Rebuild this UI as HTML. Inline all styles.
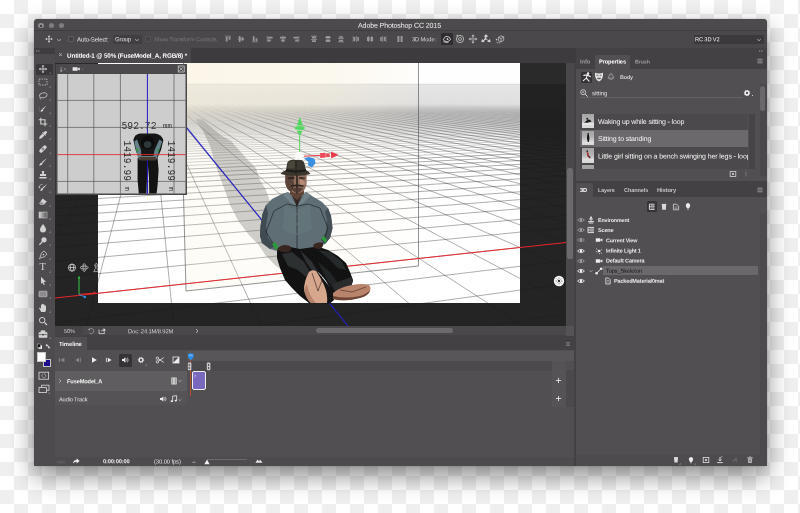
<!DOCTYPE html>
<html><head><meta charset="utf-8"><title>Adobe Photoshop CC 2015</title>
<style>
*{box-sizing:border-box;margin:0;padding:0}
html,body{width:800px;height:513px;overflow:hidden;background:#fff}
body{font-family:"Liberation Sans",sans-serif;color:#e6e6e6;font-size:6.5px;line-height:1;position:relative}
.abs,#page *{position:absolute}
#page{will-change:transform;position:absolute;left:0;top:0;width:800px;height:513px;overflow:hidden;
 background-color:#fff;
 background-image:conic-gradient(#efefef 25%,#fff 0 50%,#efefef 0 75%,#fff 0);
 background-size:28px 28px}
#shadow{left:34px;top:19px;width:732.6px;height:447.3px;border-radius:4px;box-shadow:0 10px 24px rgba(0,0,0,.46),0 0 1.5px rgba(0,0,0,.3)}
#win{left:34px;top:19px;width:732.6px;height:447.3px;border-radius:4px 4px 0 0;background:#434143;overflow:hidden}
.t{white-space:nowrap}
.b{font-weight:bold}
</style></head><body>
<div id="page">
<div id="shadow"></div>
<div id="win">
<div id="w" style="left:-34px;top:-19px;width:800px;height:513px">
<!-- title bar -->
<div style="left:34px;top:19px;width:733px;height:12px;background:#4c4a4c"></div>
<div style="left:34px;top:30px;width:733px;height:1px;background:#3f3d3f"></div>
<div style="left:38.4px;top:22.7px;width:5.8px;height:5.8px;border-radius:50%;background:#8c8a8c"></div>
<div style="left:40.2px;top:24.5px;width:2.2px;height:2.2px;border-radius:50%;background:#2a282a"></div>
<div style="left:48.6px;top:22.7px;width:5.8px;height:5.8px;border-radius:50%;background:#7f7d7f"></div>
<div style="left:58.7px;top:22.7px;width:5.8px;height:5.8px;border-radius:50%;background:#7f7d7f"></div>
<div class="t" style="left:358.0px;top:22px;transform:translateY(0.73px) rotate(.03deg);font-size:7.1px;letter-spacing:-0.150px;color:#f2f2f2;">Adobe Photoshop CC 2015</div>
<!-- options bar -->
<div style="left:34px;top:31px;width:733px;height:17px;background:#4a484a"></div>
<svg style="left:44.8px;top:35.4px" width="8.0" height="8.0" viewBox="-5 -5 10 10"><path d="M0 -4.6L1.5 -2.8H.45V-.45H2.8V-1.5L4.6 0L2.8 1.5V.45H.45V2.8H1.5L0 4.6L-1.5 2.8H-.45V.45H-2.8V1.5L-4.6 0L-2.8 -1.5V-.45H-.45V-2.8H-1.5Z" fill="#e8e8e8"/></svg>
<svg style="left:55.2px;top:36.8px" width="8" height="6" viewBox="-4 -3 8 6"><path d="M-2.0 -0.6L0 0.6L2.0 -0.6" fill="none" stroke="#c8c8c8" stroke-width="0.7"/></svg>
<div style="left:68.2px;top:36.2px;width:6.0px;height:6.0px;background:#424042;border:.6px solid #5e5c5e;border-radius:1px"></div>
<div class="t" style="left:77.0px;top:36px;transform:translateY(0.45px) rotate(.03deg);font-size:6.1px;letter-spacing:-0.144px;color:#e2e2e2;">Auto-Select:</div>
<div style="left:112.5px;top:35.0px;width:29.0px;height:9.0px;background:#403e40;border-radius:1px"></div>
<div class="t" style="left:115.0px;top:36px;transform:translateY(0.19px) rotate(.03deg);font-size:6.0px;letter-spacing:-0.135px;color:#e2e2e2;">Group</div>
<svg style="left:132.6px;top:36.8px" width="8" height="6" viewBox="-4 -3 8 6"><path d="M-2.0 -0.6L0 0.6L2.0 -0.6" fill="none" stroke="#c8c8c8" stroke-width="0.7"/></svg>
<div style="left:144.5px;top:36.0px;width:6.4px;height:6.4px;background:#454345;border:.6px solid #555355;border-radius:1px"></div>
<div class="t" style="left:153.6px;top:37px;transform:translateY(0.20px) rotate(.03deg);font-size:5.8px;letter-spacing:-0.128px;color:#7c7a7c;">Show Transform Controls</div>
<svg style="left:222.5px;top:33.8px" width="10" height="10" viewBox="-5.0 -5.0 10 10"><path d="M-3 -3.2H3V-2.4H-3Z M-2.2 -2H-.4V2.6H-2.2Z M.6 -2H2.4V.8H.6Z" fill="#989698"/></svg>
<svg style="left:236.0px;top:33.8px" width="10" height="10" viewBox="-5.0 -5.0 10 10"><path d="M-3.2 -.4H3.2V.4H-3.2Z M-2.2 -3H-.4V3H-2.2Z M.6 -1.8H2.4V1.8H.6Z" fill="#989698"/></svg>
<svg style="left:249.5px;top:33.8px" width="10" height="10" viewBox="-5.0 -5.0 10 10"><path d="M-3 2.4H3V3.2H-3Z M-2.2 -2.8H-.4V2H-2.2Z M.6 -.8H2.4V2H.6Z" fill="#989698"/></svg>
<svg style="left:265.0px;top:33.8px" width="10" height="10" viewBox="-5.0 -5.0 10 10"><path d="M-3.2 -3H-2.4V3H-3.2Z M-2 -2.2H2.6V-.4H-2Z M-2 .6H.8V2.4H-2Z" fill="#989698"/></svg>
<svg style="left:278.0px;top:33.8px" width="10" height="10" viewBox="-5.0 -5.0 10 10"><path d="M-.4 -3.2H.4V3.2H-.4Z M-3 -2.2H3V-.4H-3Z M-1.8 .6H1.8V2.4H-1.8Z" fill="#989698"/></svg>
<svg style="left:291.0px;top:33.8px" width="10" height="10" viewBox="-5.0 -5.0 10 10"><path d="M2.4 -3H3.2V3H2.4Z M-2.6 -2.2H2V-.4H-2.6Z M-.8 .6H2V2.4H-.8Z" fill="#989698"/></svg>
<svg style="left:309.0px;top:33.8px" width="10" height="10" viewBox="-5.0 -5.0 10 10"><path d="M-3 -3.2H3V-2.5H-3Z M-2 -2.2H2V-.6H-2Z M-3 .3H3V1H-3Z M-2 1.3H2V2.9H-2Z" fill="#989698"/></svg>
<svg style="left:322.5px;top:33.8px" width="10" height="10" viewBox="-5.0 -5.0 10 10"><path d="M-3 -2H3V-1.3H-3Z M-2 -3H2V-.4H-2Z M-3 1.4H3V2.1H-3Z M-2 .5H2V3.1H-2Z" fill="#989698"/></svg>
<svg style="left:335.7px;top:33.8px" width="10" height="10" viewBox="-5.0 -5.0 10 10"><path d="M-3 -.9H3V-.2H-3Z M-2 -2.8H2V-1.2H-2Z M-3 2.6H3V3.3H-3Z M-2 .7H2V2.3H-2Z" fill="#989698"/></svg>
<svg style="left:351.0px;top:33.8px" width="10" height="10" viewBox="-5.0 -5.0 10 10"><path d="M-3.2 -3H-2.5V3H-3.2Z M-2.2 -2H-.6V2H-2.2Z M.3 -3H1V3H.3Z M1.3 -2H2.9V2H1.3Z" fill="#989698"/></svg>
<svg style="left:364.5px;top:33.8px" width="10" height="10" viewBox="-5.0 -5.0 10 10"><path d="M-2 -3H-1.3V3H-2Z M-3 -2H-.4V2H-3Z M1.4 -3H2.1V3H1.4Z M.5 -2H3.1V2H.5Z" fill="#989698"/></svg>
<svg style="left:378.0px;top:33.8px" width="10" height="10" viewBox="-5.0 -5.0 10 10"><path d="M-.9 -3H-.2V3H-.9Z M-2.8 -2H-1.2V2H-2.8Z M2.6 -3H3.3V3H2.6Z M.7 -2H2.3V2H.7Z" fill="#989698"/></svg>
<svg style="left:395.0px;top:33.8px" width="10" height="10" viewBox="-5.0 -5.0 10 10"><path d="M-2.6 -3H-.6V3H-2.6Z M.6 -3H2.6V3H.6Z" fill="#989698"/></svg>
<div class="t" style="left:412.0px;top:37px;transform:translateY(0.20px) rotate(.03deg);font-size:5.8px;letter-spacing:-0.143px;color:#d8d8d8;">3D Mode:</div>
<div style="left:440.6px;top:33.0px;width:12.6px;height:12.0px;background:#2f2d2f;border-radius:1.5px"></div>
<svg style="left:441.0px;top:32.8px" width="12" height="12" viewBox="-6.0 -6.0 12 12"><path d="M-3.6 .2L-1.4 -2.6L2.2 -2L3.6 .6L.6 2.8L-2.6 2Z" fill="none" stroke="#e6e6e6" stroke-width=".8"/><path d="M-3.8 2.6Q-1 4 1.6 3.2" fill="none" stroke="#e6e6e6" stroke-width=".7"/><path d="M-.2 -1.2L1.8 .2L-.2 1.2Z" fill="#e6e6e6"/></svg>
<svg style="left:454.0px;top:32.8px" width="12" height="12" viewBox="-6.0 -6.0 12 12"><circle r="3.6" fill="none" stroke="#d0d0d0" stroke-width=".8"/><circle r="1.5" fill="none" stroke="#d0d0d0" stroke-width=".7"/><path d="M-4 -3L-2.2 -4.2L-2 -2.4Z" fill="#d0d0d0"/></svg>
<svg style="left:467.0px;top:32.8px" width="12" height="12" viewBox="-6.0 -6.0 12 12"><path d="M0 -4.4L1.6 -2.4H-1.6Z M0 4.4L1.6 2.4H-1.6Z M-4.4 0L-2.4 -1.6V1.6Z M4.4 0L2.4 -1.6V1.6Z" fill="#d0d0d0"/><circle r="1.3" fill="none" stroke="#d0d0d0" stroke-width=".7"/></svg>
<svg style="left:480.0px;top:32.8px" width="12" height="12" viewBox="-6.0 -6.0 12 12"><path d="M0 -4.4L1.5 -2.6H-1.5Z M-4.2 2.8L-3.6 .6L-1.8 2.4Z M4.2 2.8L3.6 .6L1.8 2.4Z M0 -2.8V0L-2.8 1.8M0 0L2.8 1.8" fill="#e0e0e0" stroke="#e0e0e0" stroke-width=".7"/></svg>
<svg style="left:494.0px;top:32.8px" width="12" height="12" viewBox="-6.0 -6.0 12 12"><path d="M-1.6 -1.6L1 -3.2L3.8 -2L3.6 1.4L1 3L-1.6 1.6Z M-1.6 -1.6L1 -.4L3.8 -2M1 -.4V3" fill="none" stroke="#d0d0d0" stroke-width=".7"/><path d="M-4.2 -.6L-2.4 .4L-4 1.8Z" fill="#d0d0d0"/><path d="M-3.6 3.2Q-1.6 4.2 .2 3.8" stroke="#d0d0d0" stroke-width=".6" fill="none"/></svg>
<div style="left:693.5px;top:34.6px;width:70.0px;height:9.4px;background:#3b393b;border-radius:1px"></div>
<div class="t" style="left:695.4px;top:37px;transform:translateY(0.20px) rotate(.03deg);font-size:5.7px;letter-spacing:-0.145px;color:#f0f0f0;">RC 3D V2</div>
<svg style="left:755.0px;top:36.6px" width="8" height="6" viewBox="-4 -3 8 6"><path d="M-1.6 -0.7L0 0.7L1.6 -0.7" fill="none" stroke="#e0e0e0" stroke-width="0.7"/></svg>
<!-- tab bar -->
<div style="left:34px;top:48px;width:733px;height:15px;background:#3d3b3d"></div>
<div style="left:55px;top:48px;width:136px;height:15px;background:#4a484a"></div>
<div class="t" style="left:58.5px;top:51px;font-size:7px;color:#bdbdbd">×</div>
<div class="t b" style="left:67.0px;top:52px;transform:translateY(0.78px) rotate(.03deg);font-size:6.3px;letter-spacing:-0.132px;color:#fff;">Untitled-1 @ 50% (FuseModel_A, RGB/8) *</div>
<!-- left toolbar -->
<div style="left:34px;top:48px;width:21px;height:419px;background:#4d4b4d"></div>
<div style="left:34px;top:48px;width:21px;height:6px;background:#3f3d3f"></div>
<svg style="left:35.4px;top:49.2px" width="6" height="4" viewBox="-3.0 -2.0 6 4"><path d="M-1.8 -1L-.8 0L-1.8 1M.4 -1L1.4 0L.4 1" fill="none" stroke="#a8a6a8" stroke-width=".6"/></svg>
<div style="left:36.0px;top:64.0px;width:16.6px;height:10.6px;background:#393739;border-radius:1.5px"></div>
<svg style="left:37.4px;top:63.0px" width="12" height="12" viewBox="-6.0 -6.0 12 12"><path d="M0 -4.2L1.4 -2.6H.4V-.4H2.6V-1.4L4.2 0L2.6 1.4V.4H.4V2.6H1.4L0 4.2L-1.4 2.6H-.4V.4H-2.6V1.4L-4.2 0L-2.6 -1.4V-.4H-.4V-2.6H-1.4Z" fill="#d2d2d2"/></svg>
<svg style="left:49px;top:72.2px" width="2" height="2" viewBox="0 0 2 2"><path d="M1.6 .2V1.6H.2Z" fill="#bdbdbd"/></svg>
<svg style="left:37.4px;top:76.2px" width="12" height="12" viewBox="-6.0 -6.0 12 12"><rect x="-4" y="-3" width="8" height="6" fill="none" stroke="#c4c4c4" stroke-width=".8" stroke-dasharray="1.5 1"/></svg>
<svg style="left:49px;top:85.5px" width="2" height="2" viewBox="0 0 2 2"><path d="M1.6 .2V1.6H.2Z" fill="#bdbdbd"/></svg>
<svg style="left:37.4px;top:89.5px" width="12" height="12" viewBox="-6.0 -6.0 12 12"><ellipse cx=".4" cy="-.6" rx="3.9" ry="2.5" fill="none" stroke="#c4c4c4" stroke-width=".8" transform="rotate(-12)"/><path d="M-3 1.2Q-3.6 3 -2 3.4" fill="none" stroke="#c4c4c4" stroke-width=".7"/></svg>
<svg style="left:49px;top:98.7px" width="2" height="2" viewBox="0 0 2 2"><path d="M1.6 .2V1.6H.2Z" fill="#bdbdbd"/></svg>
<svg style="left:37.4px;top:102.8px" width="12" height="12" viewBox="-6.0 -6.0 12 12"><path d="M3.6 -3.6L.2 .6L-.8 -.2Z M-.6 .2Q-2.6 .4 -2.4 2.8Q0 3 .6 1Z" fill="#d2d2d2"/><path d="M-3.8 -1.8Q-4.2 2 -2.6 3.4" stroke="#a0a0a0" stroke-width=".5" fill="none" stroke-dasharray="1 .7"/></svg>
<svg style="left:49px;top:112.0px" width="2" height="2" viewBox="0 0 2 2"><path d="M1.6 .2V1.6H.2Z" fill="#bdbdbd"/></svg>
<svg style="left:37.4px;top:116.0px" width="12" height="12" viewBox="-6.0 -6.0 12 12"><path d="M-2.2 -4.2V2H4.2 M-4.2 -2.2H2V4.2" fill="none" stroke="#d2d2d2" stroke-width="1.1"/></svg>
<svg style="left:49px;top:125.2px" width="2" height="2" viewBox="0 0 2 2"><path d="M1.6 .2V1.6H.2Z" fill="#bdbdbd"/></svg>
<svg style="left:37.4px;top:129.2px" width="12" height="12" viewBox="-6.0 -6.0 12 12"><path d="M3.8 -3.8Q2.6 -4.6 1.6 -3.4L.6 -2.4L0 -3L-.8 -2.2L2.2 .8L3 0L2.4 -.6L3.4 -1.6Q4.6 -2.6 3.8 -3.8Z M-.4 -1.4L-3.4 1.6L-3.8 3.8L-1.6 3.4L1.4 .4Z" fill="#d2d2d2"/></svg>
<svg style="left:49px;top:138.4px" width="2" height="2" viewBox="0 0 2 2"><path d="M1.6 .2V1.6H.2Z" fill="#bdbdbd"/></svg>
<svg style="left:37.4px;top:142.5px" width="12" height="12" viewBox="-6.0 -6.0 12 12"><g transform="rotate(-45)"><rect x="-4.4" y="-1.8" width="8.8" height="3.6" rx="1.6" fill="#d2d2d2"/><rect x="-1.3" y="-1.3" width="2.6" height="2.6" fill="#8a888a"/></g></svg>
<svg style="left:49px;top:151.7px" width="2" height="2" viewBox="0 0 2 2"><path d="M1.6 .2V1.6H.2Z" fill="#bdbdbd"/></svg>
<svg style="left:37.4px;top:155.8px" width="12" height="12" viewBox="-6.0 -6.0 12 12"><path d="M4 -4L-.2 1L-1.2 0Z M-1.4 .4Q-3.4 .8 -3.8 3.8Q-.8 3.6 -.2 1.6Z" fill="#d2d2d2"/></svg>
<svg style="left:49px;top:164.9px" width="2" height="2" viewBox="0 0 2 2"><path d="M1.6 .2V1.6H.2Z" fill="#bdbdbd"/></svg>
<svg style="left:37.4px;top:169.0px" width="12" height="12" viewBox="-6.0 -6.0 12 12"><path d="M-1.2 -4H1.2L.8 -1H3V1H-3V-1H-.8Z M-3.6 2H3.6V3.4H-3.6Z" fill="#d2d2d2"/></svg>
<svg style="left:49px;top:178.2px" width="2" height="2" viewBox="0 0 2 2"><path d="M1.6 .2V1.6H.2Z" fill="#bdbdbd"/></svg>
<svg style="left:37.4px;top:182.2px" width="12" height="12" viewBox="-6.0 -6.0 12 12"><path d="M4 -4L.6 .4L-.4 -.4Z M-.6 -.2Q-2.4 .2 -2.8 3Q-.2 2.8 .2 1Z" fill="#d2d2d2"/><path d="M-3.8 -.6A3 3 0 0 1 -.4 -3.6" fill="none" stroke="#d0d0d0" stroke-width=".7"/><path d="M-4.6 -1.2L-3.6 .6L-2.6 -1Z" fill="#d0d0d0"/></svg>
<svg style="left:49px;top:191.4px" width="2" height="2" viewBox="0 0 2 2"><path d="M1.6 .2V1.6H.2Z" fill="#bdbdbd"/></svg>
<svg style="left:37.4px;top:195.5px" width="12" height="12" viewBox="-6.0 -6.0 12 12"><path d="M-.4 -3.4L3.8 -.4L.6 3H-2L-3.8 1.4Z" fill="#d2d2d2"/><path d="M-2.2 -.6L1.6 2.2L.6 3H-2L-3.8 1.4Z" fill="#9a989a"/></svg>
<svg style="left:49px;top:204.7px" width="2" height="2" viewBox="0 0 2 2"><path d="M1.6 .2V1.6H.2Z" fill="#bdbdbd"/></svg>
<svg style="left:37.4px;top:208.8px" width="12" height="12" viewBox="-6.0 -6.0 12 12"><defs><linearGradient id="tg" x1="0" x2="1"><stop offset="0" stop-color="#d2d2d2"/><stop offset="1" stop-color="#555"/></linearGradient></defs><rect x="-4" y="-3" width="8" height="6" fill="url(#tg)" stroke="#c4c4c4" stroke-width=".6"/></svg>
<svg style="left:49px;top:217.9px" width="2" height="2" viewBox="0 0 2 2"><path d="M1.6 .2V1.6H.2Z" fill="#bdbdbd"/></svg>
<svg style="left:37.4px;top:222.0px" width="12" height="12" viewBox="-6.0 -6.0 12 12"><path d="M0 -4Q3 -.2 3 1.4A3 3 0 0 1 -3 1.4Q-3 -.2 0 -4Z" fill="#d2d2d2"/></svg>
<svg style="left:49px;top:231.2px" width="2" height="2" viewBox="0 0 2 2"><path d="M1.6 .2V1.6H.2Z" fill="#bdbdbd"/></svg>
<svg style="left:37.4px;top:235.2px" width="12" height="12" viewBox="-6.0 -6.0 12 12"><circle cx="1" cy="-1.2" r="2.6" fill="#d2d2d2"/><path d="M-.6 .6L-3.6 3.8" stroke="#d2d2d2" stroke-width="1.3"/></svg>
<svg style="left:49px;top:244.4px" width="2" height="2" viewBox="0 0 2 2"><path d="M1.6 .2V1.6H.2Z" fill="#bdbdbd"/></svg>
<svg style="left:37.4px;top:248.5px" width="12" height="12" viewBox="-6.0 -6.0 12 12"><path d="M1 -4L4 -1L1.8 1.6L-2.6 3L-3.6 3.8L-3 2.6L-1.6 -1.8Z" fill="none" stroke="#d2d2d2" stroke-width=".8"/><circle cx=".4" cy="-.4" r=".8" fill="#d2d2d2"/></svg>
<svg style="left:49px;top:257.7px" width="2" height="2" viewBox="0 0 2 2"><path d="M1.6 .2V1.6H.2Z" fill="#bdbdbd"/></svg>
<svg style="left:49px;top:270.9px" width="2" height="2" viewBox="0 0 2 2"><path d="M1.6 .2V1.6H.2Z" fill="#bdbdbd"/></svg>
<svg style="left:37.4px;top:275.0px" width="12" height="12" viewBox="-6.0 -6.0 12 12"><path d="M-2 -4.2L3 1L.6 1L1.8 3.6L.6 4.1L-.6 1.5L-2 3Z" fill="#d2d2d2"/></svg>
<svg style="left:49px;top:284.2px" width="2" height="2" viewBox="0 0 2 2"><path d="M1.6 .2V1.6H.2Z" fill="#bdbdbd"/></svg>
<svg style="left:37.4px;top:288.2px" width="12" height="12" viewBox="-6.0 -6.0 12 12"><rect x="-4" y="-2.8" width="8" height="5.6" rx=".6" fill="#8c8a8c" stroke="#cfcfcf" stroke-width=".6"/></svg>
<svg style="left:49px;top:297.4px" width="2" height="2" viewBox="0 0 2 2"><path d="M1.6 .2V1.6H.2Z" fill="#bdbdbd"/></svg>
<svg style="left:37.4px;top:301.5px" width="12" height="12" viewBox="-6.0 -6.0 12 12"><path d="M-1.8 4L-3.8 .6Q-4.2 -.4 -3.2 -.6L-2 .8V-2.8Q-2 -3.6 -1.2 -3.6V-.6V-3.8Q-.4 -4.6 .2 -3.8V-.6V-3.4Q1 -4 1.6 -3.2V-.4V-2.4Q2.6 -3 3 -2V1.6Q3 3 2.2 4Z" fill="#d2d2d2"/></svg>
<svg style="left:49px;top:310.7px" width="2" height="2" viewBox="0 0 2 2"><path d="M1.6 .2V1.6H.2Z" fill="#bdbdbd"/></svg>
<svg style="left:37.4px;top:314.8px" width="12" height="12" viewBox="-6.0 -6.0 12 12"><circle cx="-.8" cy="-.8" r="2.8" fill="none" stroke="#d2d2d2" stroke-width="1"/><path d="M1.4 1.4L4 4" stroke="#d2d2d2" stroke-width="1.3"/></svg>
<svg style="left:37.4px;top:328.0px" width="12" height="12" viewBox="-6.0 -6.0 12 12"><path d="M-4 -1.4H4V3.4H-4Z M-2 -1.6V-3.2H2V-1.6" fill="#d2d2d2" stroke="#d2d2d2" stroke-width=".7"/><path d="M-4 .6H4" stroke="#4d4b4d" stroke-width=".7"/><rect x="-.9" y="-.1" width="1.8" height="1.5" fill="#4d4b4d"/></svg>
<svg style="left:49px;top:337.2px" width="2" height="2" viewBox="0 0 2 2"><path d="M1.6 .2V1.6H.2Z" fill="#bdbdbd"/></svg>
<div class="t" style="left:39.6px;top:262.4px;font-size:10.5px;color:#d2d2d2;font-family:'Liberation Serif',serif">T</div>
<svg style="left:36px;top:342.6px" width="16" height="8" viewBox="0 0 16 8"><rect x="2.6" y="2.4" width="3.4" height="3.4" fill="#fff"/><rect x="1.2" y="1" width="3.4" height="3.4" fill="#111" stroke="#ddd" stroke-width=".4"/><path d="M10.4 2.2Q12.6 1.6 13 4.6 M9.8 2.2L11 1.2V3.2Z M13 5.4L12 4.2H14Z" fill="#ddd" stroke="#ddd" stroke-width=".5"/></svg>
<div style="left:43.0px;top:358.5px;width:8.0px;height:8.0px;background:#1c0f8c;border:.7px solid #c4c4c4"></div>
<div style="left:36.6px;top:352.4px;width:9.6px;height:9.6px;background:#ffffff;border:.5px solid #c8c8c8"></div>
<svg style="left:38px;top:371.4px" width="12" height="10" viewBox="0 0 12 10"><rect x="1" y="1.2" width="9.6" height="7" fill="none" stroke="#dcdcdc" stroke-width=".8"/><circle cx="5.8" cy="4.7" r="1.9" fill="none" stroke="#dcdcdc" stroke-width=".7" stroke-dasharray="1 .6"/></svg>
<svg style="left:38px;top:384px" width="13" height="11" viewBox="0 0 13 11"><rect x="3.6" y="1.2" width="7.4" height="5" fill="none" stroke="#dcdcdc" stroke-width=".8"/><rect x="1" y="3.6" width="7.4" height="5" fill="#4d4b4d" stroke="#dcdcdc" stroke-width=".8"/><path d="M11.6 9.6V8.2L10.2 9.6Z" fill="#bdbdbd"/></svg>
<!-- canvas area -->
<div style="left:55px;top:63px;width:511px;height:263px;background:#252425;overflow:hidden">
<svg style="left:0;top:0" width="511" height="263" viewBox="55 63 511 263">
<defs>
<clipPath id="cv"><rect x="98" y="63" width="422" height="240"/></clipPath>
<linearGradient id="fog" x1="0" y1="84" x2="0" y2="134" gradientUnits="userSpaceOnUse">
<stop offset="0" stop-color="#e6e6e6" stop-opacity="1"/><stop offset=".4" stop-color="#e6e6e6" stop-opacity=".96"/><stop offset=".58" stop-color="#e4e4e4" stop-opacity=".55"/><stop offset=".8" stop-color="#e6e6e6" stop-opacity=".2"/><stop offset="1" stop-color="#e6e6e6" stop-opacity="0"/></linearGradient>
<linearGradient id="dfog" x1="0" y1="84" x2="0" y2="134" gradientUnits="userSpaceOnUse"><stop offset="0" stop-color="#232223" stop-opacity="1"/><stop offset=".45" stop-color="#232223" stop-opacity=".95"/><stop offset="1" stop-color="#232223" stop-opacity="0"/></linearGradient>
<linearGradient id="tint" x1="183" y1="0" x2="419" y2="0" gradientUnits="userSpaceOnUse">
<stop offset="0" stop-color="#f9eed3" stop-opacity=".36"/><stop offset=".6" stop-color="#f9eed3" stop-opacity=".26"/><stop offset="1" stop-color="#f9eed3" stop-opacity=".04"/></linearGradient>
<linearGradient id="skyg" x1="0" y1="63" x2="0" y2="125" gradientUnits="userSpaceOnUse"><stop offset="0" stop-color="#fff"/><stop offset=".66" stop-color="#fff"/><stop offset="1" stop-color="#000"/></linearGradient>
<mask id="skym" maskUnits="userSpaceOnUse" x="183" y="63" width="236" height="62"><rect x="183" y="63" width="236" height="62" fill="url(#skyg)"/></mask>
<filter id="bl" x="-20%" y="-20%" width="140%" height="140%"><feGaussianBlur stdDeviation="1.6"/></filter>
<filter id="b1" x="-20%" y="-20%" width="140%" height="140%"><feGaussianBlur stdDeviation=".5"/></filter>
</defs>
<path d="M50.0 175.5L571.0 151.3M50.0 179.7L571.0 154.5M50.0 184.3L571.0 157.9M50.0 189.4L571.0 161.6M50.0 195.1L571.0 165.8M50.0 201.4L571.0 170.4M50.0 208.4L571.0 175.6M50.0 216.4L571.0 181.4M50.0 225.4L571.0 188.1M50.0 235.7L571.0 195.7M50.0 247.7L571.0 204.5M50.0 261.7L571.0 214.8M50.0 278.4L571.0 227.1M50.0 298.5L571.0 241.9M50.0 323.3L571.0 260.1M221.4 331.0L571.0 283.1M456.7 331.0L571.0 313.0M50.0 95.7L150.0 84.0M50.0 96.2L150.0 84.0M50.0 96.7L150.0 84.0M50.0 97.4L150.0 84.0M50.0 98.0L150.0 84.0M50.0 98.8L150.0 84.0M50.0 99.6L150.0 84.0M50.0 100.6L150.0 84.0M50.0 101.6L150.0 84.0M50.0 102.8L150.0 84.0M50.0 104.2L150.0 84.0M50.0 105.8L150.0 84.0M50.0 107.6L150.0 84.0M50.0 109.8L150.0 84.0M50.0 112.5L150.0 84.0M50.0 115.7L150.0 84.0M50.0 119.8L150.0 84.0M50.0 125.2L150.0 84.0M50.0 132.4L150.0 84.0M50.0 142.6L150.0 84.0M50.0 158.3L150.0 84.0M50.0 185.5L150.0 84.0M50.0 244.2L150.0 84.0M85.0 331.0L150.0 84.0M174.2 331.0L150.0 84.0M263.3 331.0L150.0 84.0M352.5 331.0L150.0 84.0M441.6 331.0L150.0 84.0M530.8 331.0L150.0 84.0M571.0 305.3L150.0 84.0M571.0 270.0L150.0 84.0M571.0 244.4L150.0 84.0M571.0 225.0L150.0 84.0M571.0 209.8L150.0 84.0M571.0 197.6L150.0 84.0M571.0 187.5L150.0 84.0M571.0 179.0L150.0 84.0M571.0 171.9L150.0 84.0M571.0 165.7L150.0 84.0M571.0 160.4L150.0 84.0M571.0 155.7L150.0 84.0M571.0 151.5L150.0 84.0M571.0 147.8L150.0 84.0M571.0 144.5L150.0 84.0M571.0 141.5L150.0 84.0M571.0 138.8L150.0 84.0M571.0 136.4L150.0 84.0M571.0 134.1L150.0 84.0M571.0 132.1L150.0 84.0M571.0 130.2L150.0 84.0M571.0 128.4L150.0 84.0M571.0 126.8L150.0 84.0M571.0 125.3L150.0 84.0M571.0 123.8L150.0 84.0M571.0 122.5L150.0 84.0M571.0 121.3L150.0 84.0M571.0 120.1L150.0 84.0M571.0 119.1L150.0 84.0M571.0 118.0L150.0 84.0M571.0 117.1L150.0 84.0M571.0 116.2L150.0 84.0M571.0 115.3L150.0 84.0M571.0 114.5L150.0 84.0M571.0 113.7L150.0 84.0M571.0 113.0L150.0 84.0M571.0 112.3L150.0 84.0M50.0 89.1L571.0 87.7M50.0 89.1L571.0 87.7M50.0 89.1L571.0 87.7M50.0 89.1L571.0 87.8M50.0 89.1L571.0 87.8M50.0 89.1L571.0 87.8M50.0 89.1L571.0 87.8M50.0 89.1L571.0 87.8M50.0 89.2L571.0 87.8M50.0 89.2L571.0 87.8M50.0 89.2L571.0 87.8M50.0 89.2L571.0 87.8M50.0 89.2L571.0 87.8M50.0 89.2L571.0 87.8M50.0 89.2L571.0 87.9M50.0 89.3L571.0 87.9M50.0 89.3L571.0 87.9M50.0 89.3L571.0 87.9M50.0 89.3L571.0 87.9M50.0 89.3L571.0 87.9M50.0 89.3L571.0 87.9M50.0 89.3L571.0 87.9M50.0 89.3L571.0 87.9M50.0 89.4L571.0 87.9M50.0 89.4L571.0 88.0M50.0 89.4L571.0 88.0M50.0 89.4L571.0 88.0M50.0 89.4L571.0 88.0M50.0 89.4L571.0 88.0M50.0 89.4L571.0 88.0M50.0 89.5L571.0 88.0M50.0 89.5L571.0 88.0M50.0 89.5L571.0 88.0M50.0 89.5L571.0 88.1M50.0 89.5L571.0 88.1M50.0 89.5L571.0 88.1M50.0 89.5L571.0 88.1M50.0 89.6L571.0 88.1M50.0 89.6L571.0 88.1M50.0 89.6L571.0 88.1M50.0 89.6L571.0 88.1M50.0 89.6L571.0 88.1M50.0 89.6L571.0 88.2M50.0 89.7L571.0 88.2M50.0 89.7L571.0 88.2M50.0 89.7L571.0 88.2M50.0 89.7L571.0 88.2M50.0 89.7L571.0 88.2M50.0 89.7L571.0 88.2M50.0 89.7L571.0 88.2M50.0 89.8L571.0 88.2M50.0 89.8L571.0 88.3M50.0 89.8L571.0 88.3M50.0 89.8L571.0 88.3M50.0 89.8L571.0 88.3M50.0 89.8L571.0 88.3M50.0 89.9L571.0 88.3M50.0 89.9L571.0 88.3M50.0 89.9L571.0 88.3M50.0 89.9L571.0 88.4M50.0 89.9L571.0 88.4M50.0 89.9L571.0 88.4M50.0 90.0L571.0 88.4M50.0 90.0L571.0 88.4M50.0 90.0L571.0 88.4M50.0 90.0L571.0 88.4M50.0 90.0L571.0 88.4M50.0 90.1L571.0 88.5M50.0 90.1L571.0 88.5M50.0 90.1L571.0 88.5M50.0 90.1L571.0 88.5M50.0 90.1L571.0 88.5M50.0 90.1L571.0 88.5M50.0 90.2L571.0 88.5M50.0 90.2L571.0 88.5M50.0 90.2L571.0 88.6M50.0 90.2L571.0 88.6M50.0 90.2L571.0 88.6M50.0 90.3L571.0 88.6M50.0 90.3L571.0 88.6M50.0 90.3L571.0 88.6M50.0 90.3L571.0 88.6M50.0 90.3L571.0 88.7M50.0 90.3L571.0 88.7M50.0 90.4L571.0 88.7M50.0 90.4L571.0 88.7M50.0 90.4L571.0 88.7M50.0 90.4L571.0 88.7M50.0 90.4L571.0 88.7M50.0 90.5L571.0 88.8M50.0 90.5L571.0 88.8M50.0 90.5L571.0 88.8M50.0 90.5L571.0 88.8M50.0 90.5L571.0 88.8M50.0 90.6L571.0 88.8M50.0 90.6L571.0 88.9M50.0 90.6L571.0 88.9M50.0 90.6L571.0 88.9M50.0 90.7L571.0 88.9M50.0 90.7L571.0 88.9M50.0 90.7L571.0 88.9M50.0 90.7L571.0 88.9M50.0 90.7L571.0 89.0M50.0 90.8L571.0 89.0M50.0 90.8L571.0 89.0M50.0 90.8L571.0 89.0M50.0 90.8L571.0 89.0M50.0 90.9L571.0 89.0M50.0 90.9L571.0 89.1M50.0 90.9L571.0 89.1M50.0 90.9L571.0 89.1M50.0 90.9L571.0 89.1M50.0 91.0L571.0 89.1M50.0 91.0L571.0 89.1M50.0 91.0L571.0 89.2M50.0 91.0L571.0 89.2M50.0 91.1L571.0 89.2M50.0 91.1L571.0 89.2M50.0 91.1L571.0 89.2M50.0 91.1L571.0 89.3M50.0 91.2L571.0 89.3M50.0 91.2L571.0 89.3M50.0 91.2L571.0 89.3M50.0 91.2L571.0 89.3M50.0 91.3L571.0 89.3M50.0 91.3L571.0 89.4M50.0 91.3L571.0 89.4M50.0 91.3L571.0 89.4M50.0 91.4L571.0 89.4M50.0 91.4L571.0 89.4M50.0 91.4L571.0 89.5M50.0 91.4L571.0 89.5M50.0 91.5L571.0 89.5M50.0 91.5L571.0 89.5M50.0 91.5L571.0 89.5M50.0 91.5L571.0 89.6M50.0 91.6L571.0 89.6M50.0 91.6L571.0 89.6M50.0 91.6L571.0 89.6M50.0 91.7L571.0 89.6M50.0 91.7L571.0 89.7M50.0 91.7L571.0 89.7M50.0 91.7L571.0 89.7M50.0 91.8L571.0 89.7M50.0 91.8L571.0 89.7M50.0 91.8L571.0 89.8M50.0 91.9L571.0 89.8M50.0 91.9L571.0 89.8M50.0 91.9L571.0 89.8M50.0 92.0L571.0 89.9M50.0 92.0L571.0 89.9M50.0 92.0L571.0 89.9M50.0 92.0L571.0 89.9M50.0 92.1L571.0 89.9M50.0 92.1L571.0 90.0M50.0 92.1L571.0 90.0M50.0 92.2L571.0 90.0M50.0 92.2L571.0 90.0M50.0 92.2L571.0 90.1M50.0 92.3L571.0 90.1M50.0 92.3L571.0 90.1M50.0 92.3L571.0 90.1M50.0 92.4L571.0 90.2M50.0 92.4L571.0 90.2M50.0 92.4L571.0 90.2M50.0 92.5L571.0 90.2M50.0 92.5L571.0 90.3M50.0 92.5L571.0 90.3M50.0 92.6L571.0 90.3M50.0 92.6L571.0 90.3M50.0 92.7L571.0 90.4M50.0 92.7L571.0 90.4M50.0 92.7L571.0 90.4M50.0 92.8L571.0 90.4M50.0 92.8L571.0 90.5M50.0 92.8L571.0 90.5M50.0 92.9L571.0 90.5M50.0 92.9L571.0 90.6M50.0 92.9L571.0 90.6M50.0 93.0L571.0 90.6M50.0 93.0L571.0 90.6M50.0 93.1L571.0 90.7M50.0 93.1L571.0 90.7M50.0 93.1L571.0 90.7M50.0 93.2L571.0 90.8M50.0 93.2L571.0 90.8M50.0 93.3L571.0 90.8M50.0 93.3L571.0 90.9M50.0 93.4L571.0 90.9M50.0 93.4L571.0 90.9M50.0 93.4L571.0 90.9M50.0 93.5L571.0 91.0M50.0 93.5L571.0 91.0M50.0 93.6L571.0 91.0M50.0 93.6L571.0 91.1M50.0 93.7L571.0 91.1M50.0 93.7L571.0 91.1M50.0 93.7L571.0 91.2M50.0 93.8L571.0 91.2M50.0 93.8L571.0 91.2M50.0 93.9L571.0 91.3M50.0 93.9L571.0 91.3M50.0 94.0L571.0 91.4M50.0 94.0L571.0 91.4M50.0 94.1L571.0 91.4M50.0 94.1L571.0 91.5M50.0 94.2L571.0 91.5M50.0 94.2L571.0 91.5M50.0 94.3L571.0 91.6M50.0 94.3L571.0 91.6M50.0 94.4L571.0 91.6M50.0 94.4L571.0 91.7M50.0 94.5L571.0 91.7M50.0 94.5L571.0 91.8M50.0 94.6L571.0 91.8M50.0 94.7L571.0 91.8M50.0 94.7L571.0 91.9M50.0 94.8L571.0 91.9M50.0 94.8L571.0 92.0M50.0 94.9L571.0 92.0M50.0 94.9L571.0 92.0M50.0 95.0L571.0 92.1M50.0 95.0L571.0 92.1M50.0 95.1L571.0 92.2M50.0 95.2L571.0 92.2M50.0 95.2L571.0 92.3M50.0 95.3L571.0 92.3M50.0 95.4L571.0 92.4M50.0 95.4L571.0 92.4M50.0 95.5L571.0 92.4M50.0 95.5L571.0 92.5M50.0 95.6L571.0 92.5M50.0 95.7L571.0 92.6M50.0 95.7L571.0 92.6M50.0 95.8L571.0 92.7M50.0 95.9L571.0 92.7M50.0 95.9L571.0 92.8M50.0 96.0L571.0 92.8M50.0 96.1L571.0 92.9M50.0 96.1L571.0 92.9M50.0 96.2L571.0 93.0M50.0 96.3L571.0 93.1M50.0 96.4L571.0 93.1M50.0 96.4L571.0 93.2M50.0 96.5L571.0 93.2M50.0 96.6L571.0 93.3M50.0 96.7L571.0 93.3M50.0 96.7L571.0 93.4M50.0 96.8L571.0 93.4M50.0 96.9L571.0 93.5M50.0 97.0L571.0 93.6M50.0 97.1L571.0 93.6M50.0 97.2L571.0 93.7M50.0 97.2L571.0 93.7M50.0 97.3L571.0 93.8M50.0 97.4L571.0 93.9M50.0 97.5L571.0 93.9M50.0 97.6L571.0 94.0M50.0 97.7L571.0 94.1M50.0 97.8L571.0 94.1M50.0 97.9L571.0 94.2M50.0 97.9L571.0 94.3M50.0 98.0L571.0 94.3M50.0 98.1L571.0 94.4M50.0 98.2L571.0 94.5M50.0 98.3L571.0 94.6M50.0 98.4L571.0 94.6M50.0 98.5L571.0 94.7M50.0 98.6L571.0 94.8M50.0 98.7L571.0 94.9M50.0 98.8L571.0 94.9M50.0 99.0L571.0 95.0M50.0 99.1L571.0 95.1M50.0 99.2L571.0 95.2M50.0 99.3L571.0 95.3M50.0 99.4L571.0 95.3M50.0 99.5L571.0 95.4M50.0 99.6L571.0 95.5M50.0 99.7L571.0 95.6M50.0 99.9L571.0 95.7M50.0 100.0L571.0 95.8M50.0 100.1L571.0 95.9M50.0 100.2L571.0 96.0M50.0 100.4L571.0 96.1M50.0 100.5L571.0 96.1M50.0 100.6L571.0 96.2M50.0 100.8L571.0 96.3M50.0 100.9L571.0 96.4M50.0 101.0L571.0 96.5M50.0 101.2L571.0 96.7M50.0 101.3L571.0 96.8M50.0 101.5L571.0 96.9M50.0 101.6L571.0 97.0M50.0 101.8L571.0 97.1M50.0 101.9L571.0 97.2M50.0 102.1L571.0 97.3M50.0 102.2L571.0 97.4M50.0 102.4L571.0 97.5M50.0 102.6L571.0 97.7M50.0 102.7L571.0 97.8M50.0 102.9L571.0 97.9M50.0 103.1L571.0 98.0M50.0 103.3L571.0 98.2M50.0 103.4L571.0 98.3M50.0 103.6L571.0 98.4M50.0 103.8L571.0 98.6M50.0 104.0L571.0 98.7M50.0 104.2L571.0 98.9M50.0 104.4L571.0 99.0M50.0 104.6L571.0 99.2M50.0 104.8L571.0 99.3M50.0 105.0L571.0 99.5M50.0 105.2L571.0 99.6M50.0 105.4L571.0 99.8M50.0 105.7L571.0 100.0M50.0 105.9L571.0 100.1M50.0 106.1L571.0 100.3M50.0 106.4L571.0 100.5M50.0 106.6L571.0 100.7M50.0 106.9L571.0 100.8M50.0 107.1L571.0 101.0M50.0 107.4L571.0 101.2M50.0 107.7L571.0 101.4M50.0 107.9L571.0 101.6M50.0 108.2L571.0 101.8M50.0 108.5L571.0 102.0M50.0 108.8L571.0 102.2M50.0 109.1L571.0 102.5M50.0 109.4L571.0 102.7M50.0 109.7L571.0 102.9M50.0 110.0L571.0 103.2M50.0 110.4L571.0 103.4M50.0 110.7L571.0 103.7M50.0 111.0L571.0 103.9M50.0 111.4L571.0 104.2M50.0 111.8L571.0 104.4M50.0 112.1L571.0 104.7M50.0 112.5L571.0 105.0M50.0 112.9L571.0 105.3M50.0 113.3L571.0 105.6M50.0 113.8L571.0 105.9M50.0 114.2L571.0 106.2M50.0 114.6L571.0 106.6M50.0 115.1L571.0 106.9M50.0 115.6L571.0 107.2M50.0 116.1L571.0 107.6M50.0 116.6L571.0 108.0M50.0 117.1L571.0 108.4M50.0 117.6L571.0 108.8M50.0 118.2L571.0 109.2M50.0 118.8L571.0 109.6M50.0 119.3L571.0 110.0M50.0 120.0L571.0 110.5M50.0 120.6L571.0 110.9M50.0 121.2L571.0 111.4M50.0 121.9L571.0 111.9M50.0 122.6L571.0 112.4M50.0 123.4L571.0 113.0M50.0 124.1L571.0 113.5M50.0 124.9L571.0 114.1M50.0 125.7L571.0 114.7M50.0 126.6L571.0 115.4M50.0 127.5L571.0 116.0M50.0 128.4L571.0 116.7M50.0 129.4L571.0 117.4M50.0 130.4L571.0 118.2M50.0 131.5L571.0 119.0M50.0 132.6L571.0 119.8M50.0 133.8L571.0 120.6M50.0 135.0L571.0 121.5M50.0 136.3L571.0 122.5M50.0 137.6L571.0 123.5M50.0 139.0L571.0 124.5M50.0 140.5L571.0 125.6M50.0 142.1L571.0 126.8M50.0 143.8L571.0 128.0M50.0 145.6L571.0 129.3M50.0 147.5L571.0 130.7M50.0 149.5L571.0 132.2M50.0 151.6L571.0 133.8M50.0 153.9L571.0 135.5M50.0 156.3L571.0 137.2M50.0 158.9L571.0 139.2M50.0 161.8L571.0 141.2M50.0 164.8L571.0 143.5M50.0 168.1L571.0 145.9M50.0 171.6L571.0 148.5M571.0 111.6L150.0 84.0M571.0 111.0L150.0 84.0M571.0 110.3L150.0 84.0M571.0 109.8L150.0 84.0M571.0 109.2L150.0 84.0M571.0 108.7L150.0 84.0M571.0 108.2L150.0 84.0M571.0 107.7L150.0 84.0M571.0 107.2L150.0 84.0M571.0 106.7L150.0 84.0M571.0 106.3L150.0 84.0M571.0 105.9L150.0 84.0M571.0 105.5L150.0 84.0M571.0 105.1L150.0 84.0M571.0 104.7L150.0 84.0M571.0 104.4L150.0 84.0M571.0 104.0L150.0 84.0M571.0 103.7L150.0 84.0M571.0 103.4L150.0 84.0M571.0 103.0L150.0 84.0M571.0 102.7L150.0 84.0M571.0 102.4L150.0 84.0M571.0 102.1L150.0 84.0M571.0 101.9L150.0 84.0M571.0 101.6L150.0 84.0M571.0 101.3L150.0 84.0M571.0 101.1L150.0 84.0M571.0 100.8L150.0 84.0M571.0 100.6L150.0 84.0M571.0 100.4L150.0 84.0M571.0 100.1L150.0 84.0M571.0 99.9L150.0 84.0M571.0 99.7L150.0 84.0M571.0 99.5L150.0 84.0M571.0 99.3L150.0 84.0M571.0 99.1L150.0 84.0M571.0 98.9L150.0 84.0M571.0 98.7L150.0 84.0M571.0 98.5L150.0 84.0M571.0 98.4L150.0 84.0M571.0 98.2L150.0 84.0M571.0 98.0L150.0 84.0M571.0 97.8L150.0 84.0M571.0 97.7L150.0 84.0M571.0 97.5L150.0 84.0M571.0 97.4L150.0 84.0M571.0 97.2L150.0 84.0M571.0 97.1L150.0 84.0M571.0 96.9L150.0 84.0M571.0 96.8L150.0 84.0M571.0 96.6L150.0 84.0M571.0 96.5L150.0 84.0M571.0 96.4L150.0 84.0M571.0 96.2L150.0 84.0M571.0 96.1L150.0 84.0M571.0 96.0L150.0 84.0M571.0 95.9L150.0 84.0M571.0 95.7L150.0 84.0M571.0 95.6L150.0 84.0M571.0 95.5L150.0 84.0M571.0 95.4L150.0 84.0M571.0 95.3L150.0 84.0M571.0 95.2L150.0 84.0M571.0 95.1L150.0 84.0M571.0 95.0L150.0 84.0M571.0 94.9L150.0 84.0M571.0 94.8L150.0 84.0M571.0 94.7L150.0 84.0M571.0 94.6L150.0 84.0M571.0 94.5L150.0 84.0M571.0 94.4L150.0 84.0M571.0 94.3L150.0 84.0M571.0 94.2L150.0 84.0M571.0 94.1L150.0 84.0M571.0 94.0L150.0 84.0M571.0 93.9L150.0 84.0M571.0 93.9L150.0 84.0M571.0 93.8L150.0 84.0M571.0 93.7L150.0 84.0M571.0 93.6L150.0 84.0M571.0 93.5L150.0 84.0M571.0 93.5L150.0 84.0M571.0 93.4L150.0 84.0M571.0 93.3L150.0 84.0M571.0 93.2L150.0 84.0M571.0 93.2L150.0 84.0M571.0 93.1L150.0 84.0M571.0 93.0L150.0 84.0M571.0 93.0L150.0 84.0M571.0 92.9L150.0 84.0M571.0 92.8L150.0 84.0M571.0 92.8L150.0 84.0M571.0 92.7L150.0 84.0M571.0 92.6L150.0 84.0M571.0 92.6L150.0 84.0M571.0 92.5L150.0 84.0M571.0 92.4L150.0 84.0M571.0 92.4L150.0 84.0M571.0 92.3L150.0 84.0M571.0 92.3L150.0 84.0M571.0 92.2L150.0 84.0M571.0 92.1L150.0 84.0M571.0 92.1L150.0 84.0M571.0 92.0L150.0 84.0M571.0 92.0L150.0 84.0M571.0 91.9L150.0 84.0M571.0 91.9L150.0 84.0M571.0 91.8L150.0 84.0M571.0 91.8L150.0 84.0M571.0 91.7L150.0 84.0M571.0 91.7L150.0 84.0M571.0 91.6L150.0 84.0M571.0 91.6L150.0 84.0M571.0 91.5L150.0 84.0M571.0 91.5L150.0 84.0M571.0 91.4L150.0 84.0M571.0 91.4L150.0 84.0M571.0 91.3L150.0 84.0M571.0 91.3L150.0 84.0M571.0 91.2L150.0 84.0M571.0 91.2L150.0 84.0M571.0 91.1L150.0 84.0M571.0 91.1L150.0 84.0M571.0 91.1L150.0 84.0M571.0 91.0L150.0 84.0M571.0 91.0L150.0 84.0M571.0 90.9L150.0 84.0M571.0 90.9L150.0 84.0M571.0 90.8L150.0 84.0M571.0 90.8L150.0 84.0M571.0 90.8L150.0 84.0M571.0 90.7L150.0 84.0M571.0 90.7L150.0 84.0M571.0 90.7L150.0 84.0M571.0 90.6L150.0 84.0M571.0 90.6L150.0 84.0M571.0 90.5L150.0 84.0M571.0 90.5L150.0 84.0M571.0 90.5L150.0 84.0M571.0 90.4L150.0 84.0M571.0 90.4L150.0 84.0M571.0 90.4L150.0 84.0M571.0 90.3L150.0 84.0M571.0 90.3L150.0 84.0M571.0 90.3L150.0 84.0M571.0 90.2L150.0 84.0M571.0 90.2L150.0 84.0M571.0 90.2L150.0 84.0M571.0 90.1L150.0 84.0M571.0 90.1L150.0 84.0M571.0 90.1L150.0 84.0M571.0 90.0L150.0 84.0M571.0 90.0L150.0 84.0M571.0 90.0L150.0 84.0M571.0 89.9L150.0 84.0M571.0 89.9L150.0 84.0M571.0 89.9L150.0 84.0M571.0 89.9L150.0 84.0M571.0 89.8L150.0 84.0M571.0 89.8L150.0 84.0M571.0 89.8L150.0 84.0M571.0 89.7L150.0 84.0M571.0 89.7L150.0 84.0M571.0 89.7L150.0 84.0M571.0 89.7L150.0 84.0M571.0 89.6L150.0 84.0M571.0 89.6L150.0 84.0M571.0 89.6L150.0 84.0M571.0 89.5L150.0 84.0M571.0 89.5L150.0 84.0M571.0 89.5L150.0 84.0M571.0 89.5L150.0 84.0M571.0 89.4L150.0 84.0M571.0 89.4L150.0 84.0M571.0 89.4L150.0 84.0M571.0 89.4L150.0 84.0M571.0 89.3L150.0 84.0M571.0 89.3L150.0 84.0M571.0 89.3L150.0 84.0M571.0 89.3L150.0 84.0M571.0 89.2L150.0 84.0M571.0 89.2L150.0 84.0M571.0 89.2L150.0 84.0M571.0 89.2L150.0 84.0M571.0 89.2L150.0 84.0M571.0 89.1L150.0 84.0M571.0 89.1L150.0 84.0M571.0 89.1L150.0 84.0M571.0 89.1L150.0 84.0M571.0 89.0L150.0 84.0M571.0 89.0L150.0 84.0M571.0 89.0L150.0 84.0M571.0 89.0L150.0 84.0M571.0 89.0L150.0 84.0M571.0 88.9L150.0 84.0M571.0 88.9L150.0 84.0M571.0 88.9L150.0 84.0M571.0 88.9L150.0 84.0M571.0 88.9L150.0 84.0M571.0 88.8L150.0 84.0M571.0 88.8L150.0 84.0M571.0 88.8L150.0 84.0M571.0 88.8L150.0 84.0M571.0 88.8L150.0 84.0M571.0 88.7L150.0 84.0M571.0 88.7L150.0 84.0M571.0 88.7L150.0 84.0M571.0 88.7L150.0 84.0M571.0 88.7L150.0 84.0M571.0 88.6L150.0 84.0M571.0 88.6L150.0 84.0M571.0 88.6L150.0 84.0M571.0 88.6L150.0 84.0M571.0 88.6L150.0 84.0M571.0 88.6L150.0 84.0M571.0 88.5L150.0 84.0M571.0 88.5L150.0 84.0M571.0 88.5L150.0 84.0M571.0 88.5L150.0 84.0M571.0 88.5L150.0 84.0M571.0 88.4L150.0 84.0M571.0 88.4L150.0 84.0M571.0 88.4L150.0 84.0M571.0 88.4L150.0 84.0M571.0 88.4L150.0 84.0M571.0 88.4L150.0 84.0M571.0 88.3L150.0 84.0M571.0 88.3L150.0 84.0M571.0 88.3L150.0 84.0M571.0 88.3L150.0 84.0M571.0 88.3L150.0 84.0M571.0 88.3L150.0 84.0M571.0 88.3L150.0 84.0M571.0 88.2L150.0 84.0M571.0 88.2L150.0 84.0M571.0 88.2L150.0 84.0M571.0 88.2L150.0 84.0M571.0 88.2L150.0 84.0M571.0 88.2L150.0 84.0M571.0 88.1L150.0 84.0M571.0 88.1L150.0 84.0M571.0 88.1L150.0 84.0M571.0 88.1L150.0 84.0M571.0 88.1L150.0 84.0M571.0 88.1L150.0 84.0M571.0 88.1L150.0 84.0M571.0 88.0L150.0 84.0M571.0 88.0L150.0 84.0M571.0 88.0L150.0 84.0M571.0 88.0L150.0 84.0M571.0 88.0L150.0 84.0M571.0 88.0L150.0 84.0M571.0 88.0L150.0 84.0M571.0 88.0L150.0 84.0M571.0 87.9L150.0 84.0M571.0 87.9L150.0 84.0M571.0 87.9L150.0 84.0M571.0 87.9L150.0 84.0M571.0 87.9L150.0 84.0M571.0 87.9L150.0 84.0M571.0 87.9L150.0 84.0M571.0 87.8L150.0 84.0M571.0 87.8L150.0 84.0M571.0 87.8L150.0 84.0M571.0 87.8L150.0 84.0M571.0 87.8L150.0 84.0M571.0 87.8L150.0 84.0M571.0 87.8L150.0 84.0M571.0 87.8L150.0 84.0M571.0 87.7L150.0 84.0M571.0 87.7L150.0 84.0M571.0 87.7L150.0 84.0M571.0 87.7L150.0 84.0M571.0 87.7L150.0 84.0M571.0 87.7L150.0 84.0M571.0 87.7L150.0 84.0M571.0 87.7L150.0 84.0M571.0 87.7L150.0 84.0M571.0 87.6L150.0 84.0M571.0 87.6L150.0 84.0M571.0 87.6L150.0 84.0M571.0 87.6L150.0 84.0M571.0 87.6L150.0 84.0M571.0 87.6L150.0 84.0M571.0 87.6L150.0 84.0M571.0 87.6L150.0 84.0M571.0 87.6L150.0 84.0M571.0 87.5L150.0 84.0M571.0 87.5L150.0 84.0M571.0 87.5L150.0 84.0M571.0 87.5L150.0 84.0M571.0 87.5L150.0 84.0M571.0 87.5L150.0 84.0M571.0 87.5L150.0 84.0M571.0 87.5L150.0 84.0M571.0 87.5L150.0 84.0M571.0 87.4L150.0 84.0M571.0 87.4L150.0 84.0M571.0 87.4L150.0 84.0M571.0 87.4L150.0 84.0M571.0 87.4L150.0 84.0M571.0 87.4L150.0 84.0M571.0 87.4L150.0 84.0M571.0 87.4L150.0 84.0M571.0 87.4L150.0 84.0M571.0 87.4L150.0 84.0M571.0 87.3L150.0 84.0M571.0 87.3L150.0 84.0M571.0 87.3L150.0 84.0M571.0 87.3L150.0 84.0M571.0 87.3L150.0 84.0M571.0 87.3L150.0 84.0M571.0 87.3L150.0 84.0M571.0 87.3L150.0 84.0M571.0 87.3L150.0 84.0M571.0 87.3L150.0 84.0M571.0 87.3L150.0 84.0M571.0 87.2L150.0 84.0M571.0 87.2L150.0 84.0M571.0 87.2L150.0 84.0M571.0 87.2L150.0 84.0M571.0 87.2L150.0 84.0M571.0 87.2L150.0 84.0M571.0 87.2L150.0 84.0M571.0 87.2L150.0 84.0M571.0 87.2L150.0 84.0M571.0 87.2L150.0 84.0M571.0 87.2L150.0 84.0M571.0 87.1L150.0 84.0M571.0 87.1L150.0 84.0M571.0 87.1L150.0 84.0M571.0 87.1L150.0 84.0M571.0 87.1L150.0 84.0M571.0 87.1L150.0 84.0M571.0 87.1L150.0 84.0M571.0 87.1L150.0 84.0M571.0 87.1L150.0 84.0M571.0 87.1L150.0 84.0M571.0 87.1L150.0 84.0M571.0 87.1L150.0 84.0M571.0 87.1L150.0 84.0M571.0 87.0L150.0 84.0M571.0 87.0L150.0 84.0M571.0 87.0L150.0 84.0M571.0 87.0L150.0 84.0M571.0 87.0L150.0 84.0M571.0 87.0L150.0 84.0M571.0 87.0L150.0 84.0M571.0 87.0L150.0 84.0M571.0 87.0L150.0 84.0M571.0 87.0L150.0 84.0M571.0 87.0L150.0 84.0M571.0 87.0L150.0 84.0M571.0 87.0L150.0 84.0M571.0 86.9L150.0 84.0M571.0 86.9L150.0 84.0M571.0 86.9L150.0 84.0M571.0 86.9L150.0 84.0M571.0 86.9L150.0 84.0M571.0 86.9L150.0 84.0" stroke="#1c1b1c" stroke-width=".6" fill="none" opacity=".55"/>
<rect x="55" y="84" width="511" height="50" fill="url(#dfog)"/>
<rect x="55" y="63" width="511" height="21" fill="#2b2a2b"/>
<g clip-path="url(#cv)">
<rect x="98" y="63" width="422" height="240" fill="#fff"/>
<path d="M195 119 L202 119 L212 128 L222 136 L231 141 L239 150 L247 159 L256 168 L259 178 L266 190 L271 204 L290 215 L300 250 L292 266 L284 271 L276 266 L266 256 L258 244 L249 235 L239 222 L230 205 L224 188 L218 172 L214 160 L210 146 L203 131 Z" fill="#000" opacity=".22" filter="url(#b1)"/>
<path d="M50.0 175.5L571.0 151.3M50.0 179.7L571.0 154.5M50.0 184.3L571.0 157.9M50.0 189.4L571.0 161.6M50.0 195.1L571.0 165.8M50.0 201.4L571.0 170.4M50.0 208.4L571.0 175.6M50.0 216.4L571.0 181.4M50.0 225.4L571.0 188.1M50.0 235.7L571.0 195.7M50.0 247.7L571.0 204.5M50.0 261.7L571.0 214.8M50.0 278.4L571.0 227.1M50.0 298.5L571.0 241.9M50.0 323.3L571.0 260.1M221.4 331.0L571.0 283.1M456.7 331.0L571.0 313.0M50.0 95.7L150.0 84.0M50.0 96.2L150.0 84.0M50.0 96.7L150.0 84.0M50.0 97.4L150.0 84.0M50.0 98.0L150.0 84.0M50.0 98.8L150.0 84.0M50.0 99.6L150.0 84.0M50.0 100.6L150.0 84.0M50.0 101.6L150.0 84.0M50.0 102.8L150.0 84.0M50.0 104.2L150.0 84.0M50.0 105.8L150.0 84.0M50.0 107.6L150.0 84.0M50.0 109.8L150.0 84.0M50.0 112.5L150.0 84.0M50.0 115.7L150.0 84.0M50.0 119.8L150.0 84.0M50.0 125.2L150.0 84.0M50.0 132.4L150.0 84.0M50.0 142.6L150.0 84.0M50.0 158.3L150.0 84.0M50.0 185.5L150.0 84.0M50.0 244.2L150.0 84.0M85.0 331.0L150.0 84.0M174.2 331.0L150.0 84.0M263.3 331.0L150.0 84.0M352.5 331.0L150.0 84.0M441.6 331.0L150.0 84.0M530.8 331.0L150.0 84.0M571.0 305.3L150.0 84.0M571.0 270.0L150.0 84.0M571.0 244.4L150.0 84.0M571.0 225.0L150.0 84.0M571.0 209.8L150.0 84.0M571.0 197.6L150.0 84.0M571.0 187.5L150.0 84.0M571.0 179.0L150.0 84.0M571.0 171.9L150.0 84.0M571.0 165.7L150.0 84.0M571.0 160.4L150.0 84.0M571.0 155.7L150.0 84.0M571.0 151.5L150.0 84.0M571.0 147.8L150.0 84.0M571.0 144.5L150.0 84.0M571.0 141.5L150.0 84.0M571.0 138.8L150.0 84.0M571.0 136.4L150.0 84.0M571.0 134.1L150.0 84.0M571.0 132.1L150.0 84.0M571.0 130.2L150.0 84.0M571.0 128.4L150.0 84.0M571.0 126.8L150.0 84.0M571.0 125.3L150.0 84.0M571.0 123.8L150.0 84.0M571.0 122.5L150.0 84.0M571.0 121.3L150.0 84.0M571.0 120.1L150.0 84.0M571.0 119.1L150.0 84.0M571.0 118.0L150.0 84.0M571.0 117.1L150.0 84.0M571.0 116.2L150.0 84.0M571.0 115.3L150.0 84.0M571.0 114.5L150.0 84.0M571.0 113.7L150.0 84.0M571.0 113.0L150.0 84.0M571.0 112.3L150.0 84.0" stroke="#2c2c2c" stroke-width=".52" fill="none" opacity=".74"/>
<path d="M50.0 89.1L571.0 87.7M50.0 89.1L571.0 87.7M50.0 89.1L571.0 87.7M50.0 89.1L571.0 87.8M50.0 89.1L571.0 87.8M50.0 89.1L571.0 87.8M50.0 89.1L571.0 87.8M50.0 89.1L571.0 87.8M50.0 89.2L571.0 87.8M50.0 89.2L571.0 87.8M50.0 89.2L571.0 87.8M50.0 89.2L571.0 87.8M50.0 89.2L571.0 87.8M50.0 89.2L571.0 87.8M50.0 89.2L571.0 87.9M50.0 89.3L571.0 87.9M50.0 89.3L571.0 87.9M50.0 89.3L571.0 87.9M50.0 89.3L571.0 87.9M50.0 89.3L571.0 87.9M50.0 89.3L571.0 87.9M50.0 89.3L571.0 87.9M50.0 89.3L571.0 87.9M50.0 89.4L571.0 87.9M50.0 89.4L571.0 88.0M50.0 89.4L571.0 88.0M50.0 89.4L571.0 88.0M50.0 89.4L571.0 88.0M50.0 89.4L571.0 88.0M50.0 89.4L571.0 88.0M50.0 89.5L571.0 88.0M50.0 89.5L571.0 88.0M50.0 89.5L571.0 88.0M50.0 89.5L571.0 88.1M50.0 89.5L571.0 88.1M50.0 89.5L571.0 88.1M50.0 89.5L571.0 88.1M50.0 89.6L571.0 88.1M50.0 89.6L571.0 88.1M50.0 89.6L571.0 88.1M50.0 89.6L571.0 88.1M50.0 89.6L571.0 88.1M50.0 89.6L571.0 88.2M50.0 89.7L571.0 88.2M50.0 89.7L571.0 88.2M50.0 89.7L571.0 88.2M50.0 89.7L571.0 88.2M50.0 89.7L571.0 88.2M50.0 89.7L571.0 88.2M50.0 89.7L571.0 88.2M50.0 89.8L571.0 88.2M50.0 89.8L571.0 88.3M50.0 89.8L571.0 88.3M50.0 89.8L571.0 88.3M50.0 89.8L571.0 88.3M50.0 89.8L571.0 88.3M50.0 89.9L571.0 88.3M50.0 89.9L571.0 88.3M50.0 89.9L571.0 88.3M50.0 89.9L571.0 88.4M50.0 89.9L571.0 88.4M50.0 89.9L571.0 88.4M50.0 90.0L571.0 88.4M50.0 90.0L571.0 88.4M50.0 90.0L571.0 88.4M50.0 90.0L571.0 88.4M50.0 90.0L571.0 88.4M50.0 90.1L571.0 88.5M50.0 90.1L571.0 88.5M50.0 90.1L571.0 88.5M50.0 90.1L571.0 88.5M50.0 90.1L571.0 88.5M50.0 90.1L571.0 88.5M50.0 90.2L571.0 88.5M50.0 90.2L571.0 88.5M50.0 90.2L571.0 88.6M50.0 90.2L571.0 88.6M50.0 90.2L571.0 88.6M50.0 90.3L571.0 88.6M50.0 90.3L571.0 88.6M50.0 90.3L571.0 88.6M50.0 90.3L571.0 88.6M50.0 90.3L571.0 88.7M50.0 90.3L571.0 88.7M50.0 90.4L571.0 88.7M50.0 90.4L571.0 88.7M50.0 90.4L571.0 88.7M50.0 90.4L571.0 88.7M50.0 90.4L571.0 88.7M50.0 90.5L571.0 88.8M50.0 90.5L571.0 88.8M50.0 90.5L571.0 88.8M50.0 90.5L571.0 88.8M50.0 90.5L571.0 88.8M50.0 90.6L571.0 88.8M50.0 90.6L571.0 88.9M50.0 90.6L571.0 88.9M50.0 90.6L571.0 88.9M50.0 90.7L571.0 88.9M50.0 90.7L571.0 88.9M50.0 90.7L571.0 88.9M50.0 90.7L571.0 88.9M50.0 90.7L571.0 89.0M50.0 90.8L571.0 89.0M50.0 90.8L571.0 89.0M50.0 90.8L571.0 89.0M50.0 90.8L571.0 89.0M50.0 90.9L571.0 89.0M50.0 90.9L571.0 89.1M50.0 90.9L571.0 89.1M50.0 90.9L571.0 89.1M50.0 90.9L571.0 89.1M50.0 91.0L571.0 89.1M50.0 91.0L571.0 89.1M50.0 91.0L571.0 89.2M50.0 91.0L571.0 89.2M50.0 91.1L571.0 89.2M50.0 91.1L571.0 89.2M50.0 91.1L571.0 89.2M50.0 91.1L571.0 89.3M50.0 91.2L571.0 89.3M50.0 91.2L571.0 89.3M50.0 91.2L571.0 89.3M50.0 91.2L571.0 89.3M50.0 91.3L571.0 89.3M50.0 91.3L571.0 89.4M50.0 91.3L571.0 89.4M50.0 91.3L571.0 89.4M50.0 91.4L571.0 89.4M50.0 91.4L571.0 89.4M50.0 91.4L571.0 89.5M50.0 91.4L571.0 89.5M50.0 91.5L571.0 89.5M50.0 91.5L571.0 89.5M50.0 91.5L571.0 89.5M50.0 91.5L571.0 89.6M50.0 91.6L571.0 89.6M50.0 91.6L571.0 89.6M50.0 91.6L571.0 89.6M50.0 91.7L571.0 89.6M50.0 91.7L571.0 89.7M50.0 91.7L571.0 89.7M50.0 91.7L571.0 89.7M50.0 91.8L571.0 89.7M50.0 91.8L571.0 89.7M50.0 91.8L571.0 89.8M50.0 91.9L571.0 89.8M50.0 91.9L571.0 89.8M50.0 91.9L571.0 89.8M50.0 92.0L571.0 89.9M50.0 92.0L571.0 89.9M50.0 92.0L571.0 89.9M50.0 92.0L571.0 89.9M50.0 92.1L571.0 89.9M50.0 92.1L571.0 90.0M50.0 92.1L571.0 90.0M50.0 92.2L571.0 90.0M50.0 92.2L571.0 90.0M50.0 92.2L571.0 90.1M50.0 92.3L571.0 90.1M50.0 92.3L571.0 90.1M50.0 92.3L571.0 90.1M50.0 92.4L571.0 90.2M50.0 92.4L571.0 90.2M50.0 92.4L571.0 90.2M50.0 92.5L571.0 90.2M50.0 92.5L571.0 90.3M50.0 92.5L571.0 90.3M50.0 92.6L571.0 90.3M50.0 92.6L571.0 90.3M50.0 92.7L571.0 90.4M50.0 92.7L571.0 90.4M50.0 92.7L571.0 90.4M50.0 92.8L571.0 90.4M50.0 92.8L571.0 90.5M50.0 92.8L571.0 90.5M50.0 92.9L571.0 90.5M50.0 92.9L571.0 90.6M50.0 92.9L571.0 90.6M50.0 93.0L571.0 90.6M50.0 93.0L571.0 90.6M50.0 93.1L571.0 90.7M50.0 93.1L571.0 90.7M50.0 93.1L571.0 90.7M50.0 93.2L571.0 90.8M50.0 93.2L571.0 90.8M50.0 93.3L571.0 90.8M50.0 93.3L571.0 90.9M50.0 93.4L571.0 90.9M50.0 93.4L571.0 90.9M50.0 93.4L571.0 90.9M50.0 93.5L571.0 91.0M50.0 93.5L571.0 91.0M50.0 93.6L571.0 91.0M50.0 93.6L571.0 91.1M50.0 93.7L571.0 91.1M50.0 93.7L571.0 91.1M50.0 93.7L571.0 91.2M50.0 93.8L571.0 91.2M50.0 93.8L571.0 91.2M50.0 93.9L571.0 91.3M50.0 93.9L571.0 91.3M50.0 94.0L571.0 91.4M50.0 94.0L571.0 91.4M50.0 94.1L571.0 91.4M50.0 94.1L571.0 91.5M50.0 94.2L571.0 91.5M50.0 94.2L571.0 91.5M50.0 94.3L571.0 91.6M50.0 94.3L571.0 91.6M50.0 94.4L571.0 91.6M50.0 94.4L571.0 91.7M50.0 94.5L571.0 91.7M50.0 94.5L571.0 91.8M50.0 94.6L571.0 91.8M50.0 94.7L571.0 91.8M50.0 94.7L571.0 91.9M50.0 94.8L571.0 91.9M50.0 94.8L571.0 92.0M50.0 94.9L571.0 92.0M50.0 94.9L571.0 92.0M50.0 95.0L571.0 92.1M50.0 95.0L571.0 92.1M50.0 95.1L571.0 92.2M50.0 95.2L571.0 92.2M50.0 95.2L571.0 92.3M50.0 95.3L571.0 92.3M50.0 95.4L571.0 92.4M50.0 95.4L571.0 92.4M50.0 95.5L571.0 92.4M50.0 95.5L571.0 92.5M50.0 95.6L571.0 92.5M50.0 95.7L571.0 92.6M50.0 95.7L571.0 92.6M50.0 95.8L571.0 92.7M50.0 95.9L571.0 92.7M50.0 95.9L571.0 92.8M50.0 96.0L571.0 92.8M50.0 96.1L571.0 92.9M50.0 96.1L571.0 92.9M50.0 96.2L571.0 93.0M50.0 96.3L571.0 93.1M50.0 96.4L571.0 93.1M50.0 96.4L571.0 93.2M50.0 96.5L571.0 93.2M50.0 96.6L571.0 93.3M50.0 96.7L571.0 93.3M50.0 96.7L571.0 93.4M50.0 96.8L571.0 93.4M50.0 96.9L571.0 93.5M50.0 97.0L571.0 93.6M50.0 97.1L571.0 93.6M50.0 97.2L571.0 93.7M50.0 97.2L571.0 93.7M50.0 97.3L571.0 93.8M50.0 97.4L571.0 93.9M50.0 97.5L571.0 93.9M50.0 97.6L571.0 94.0M50.0 97.7L571.0 94.1M50.0 97.8L571.0 94.1M50.0 97.9L571.0 94.2M50.0 97.9L571.0 94.3M50.0 98.0L571.0 94.3M50.0 98.1L571.0 94.4M50.0 98.2L571.0 94.5M50.0 98.3L571.0 94.6M50.0 98.4L571.0 94.6M50.0 98.5L571.0 94.7M50.0 98.6L571.0 94.8M50.0 98.7L571.0 94.9M50.0 98.8L571.0 94.9M50.0 99.0L571.0 95.0M50.0 99.1L571.0 95.1M50.0 99.2L571.0 95.2M50.0 99.3L571.0 95.3M50.0 99.4L571.0 95.3M50.0 99.5L571.0 95.4M50.0 99.6L571.0 95.5M50.0 99.7L571.0 95.6M50.0 99.9L571.0 95.7M50.0 100.0L571.0 95.8M50.0 100.1L571.0 95.9M50.0 100.2L571.0 96.0M50.0 100.4L571.0 96.1M50.0 100.5L571.0 96.1M50.0 100.6L571.0 96.2M50.0 100.8L571.0 96.3M50.0 100.9L571.0 96.4M50.0 101.0L571.0 96.5M50.0 101.2L571.0 96.7M50.0 101.3L571.0 96.8M50.0 101.5L571.0 96.9M50.0 101.6L571.0 97.0M50.0 101.8L571.0 97.1M50.0 101.9L571.0 97.2M50.0 102.1L571.0 97.3M50.0 102.2L571.0 97.4M50.0 102.4L571.0 97.5M50.0 102.6L571.0 97.7M50.0 102.7L571.0 97.8M50.0 102.9L571.0 97.9M50.0 103.1L571.0 98.0M50.0 103.3L571.0 98.2M50.0 103.4L571.0 98.3M50.0 103.6L571.0 98.4M50.0 103.8L571.0 98.6M50.0 104.0L571.0 98.7M50.0 104.2L571.0 98.9M50.0 104.4L571.0 99.0M50.0 104.6L571.0 99.2M50.0 104.8L571.0 99.3M50.0 105.0L571.0 99.5M50.0 105.2L571.0 99.6M50.0 105.4L571.0 99.8M50.0 105.7L571.0 100.0M50.0 105.9L571.0 100.1M50.0 106.1L571.0 100.3M50.0 106.4L571.0 100.5M50.0 106.6L571.0 100.7M50.0 106.9L571.0 100.8M50.0 107.1L571.0 101.0M50.0 107.4L571.0 101.2M50.0 107.7L571.0 101.4M50.0 107.9L571.0 101.6M50.0 108.2L571.0 101.8M50.0 108.5L571.0 102.0M50.0 108.8L571.0 102.2M50.0 109.1L571.0 102.5M50.0 109.4L571.0 102.7M50.0 109.7L571.0 102.9M50.0 110.0L571.0 103.2M50.0 110.4L571.0 103.4M50.0 110.7L571.0 103.7M50.0 111.0L571.0 103.9M50.0 111.4L571.0 104.2M50.0 111.8L571.0 104.4M50.0 112.1L571.0 104.7M50.0 112.5L571.0 105.0M50.0 112.9L571.0 105.3M50.0 113.3L571.0 105.6M50.0 113.8L571.0 105.9M50.0 114.2L571.0 106.2M50.0 114.6L571.0 106.6M50.0 115.1L571.0 106.9M50.0 115.6L571.0 107.2M50.0 116.1L571.0 107.6M50.0 116.6L571.0 108.0M50.0 117.1L571.0 108.4M50.0 117.6L571.0 108.8M50.0 118.2L571.0 109.2M50.0 118.8L571.0 109.6M50.0 119.3L571.0 110.0M50.0 120.0L571.0 110.5M50.0 120.6L571.0 110.9M50.0 121.2L571.0 111.4M50.0 121.9L571.0 111.9M50.0 122.6L571.0 112.4M50.0 123.4L571.0 113.0M50.0 124.1L571.0 113.5M50.0 124.9L571.0 114.1M50.0 125.7L571.0 114.7M50.0 126.6L571.0 115.4M50.0 127.5L571.0 116.0M50.0 128.4L571.0 116.7M50.0 129.4L571.0 117.4M50.0 130.4L571.0 118.2M50.0 131.5L571.0 119.0M50.0 132.6L571.0 119.8M50.0 133.8L571.0 120.6M50.0 135.0L571.0 121.5M50.0 136.3L571.0 122.5M50.0 137.6L571.0 123.5M50.0 139.0L571.0 124.5M50.0 140.5L571.0 125.6M50.0 142.1L571.0 126.8M50.0 143.8L571.0 128.0M50.0 145.6L571.0 129.3M50.0 147.5L571.0 130.7M50.0 149.5L571.0 132.2M50.0 151.6L571.0 133.8M50.0 153.9L571.0 135.5M50.0 156.3L571.0 137.2M50.0 158.9L571.0 139.2M50.0 161.8L571.0 141.2M50.0 164.8L571.0 143.5M50.0 168.1L571.0 145.9M50.0 171.6L571.0 148.5M571.0 111.6L150.0 84.0M571.0 111.0L150.0 84.0M571.0 110.3L150.0 84.0M571.0 109.8L150.0 84.0M571.0 109.2L150.0 84.0M571.0 108.7L150.0 84.0M571.0 108.2L150.0 84.0M571.0 107.7L150.0 84.0M571.0 107.2L150.0 84.0M571.0 106.7L150.0 84.0M571.0 106.3L150.0 84.0M571.0 105.9L150.0 84.0M571.0 105.5L150.0 84.0M571.0 105.1L150.0 84.0M571.0 104.7L150.0 84.0M571.0 104.4L150.0 84.0M571.0 104.0L150.0 84.0M571.0 103.7L150.0 84.0M571.0 103.4L150.0 84.0M571.0 103.0L150.0 84.0M571.0 102.7L150.0 84.0M571.0 102.4L150.0 84.0M571.0 102.1L150.0 84.0M571.0 101.9L150.0 84.0M571.0 101.6L150.0 84.0M571.0 101.3L150.0 84.0M571.0 101.1L150.0 84.0M571.0 100.8L150.0 84.0M571.0 100.6L150.0 84.0M571.0 100.4L150.0 84.0M571.0 100.1L150.0 84.0M571.0 99.9L150.0 84.0M571.0 99.7L150.0 84.0M571.0 99.5L150.0 84.0M571.0 99.3L150.0 84.0M571.0 99.1L150.0 84.0M571.0 98.9L150.0 84.0M571.0 98.7L150.0 84.0M571.0 98.5L150.0 84.0M571.0 98.4L150.0 84.0M571.0 98.2L150.0 84.0M571.0 98.0L150.0 84.0M571.0 97.8L150.0 84.0M571.0 97.7L150.0 84.0M571.0 97.5L150.0 84.0M571.0 97.4L150.0 84.0M571.0 97.2L150.0 84.0M571.0 97.1L150.0 84.0M571.0 96.9L150.0 84.0M571.0 96.8L150.0 84.0M571.0 96.6L150.0 84.0M571.0 96.5L150.0 84.0M571.0 96.4L150.0 84.0M571.0 96.2L150.0 84.0M571.0 96.1L150.0 84.0M571.0 96.0L150.0 84.0M571.0 95.9L150.0 84.0M571.0 95.7L150.0 84.0M571.0 95.6L150.0 84.0M571.0 95.5L150.0 84.0M571.0 95.4L150.0 84.0M571.0 95.3L150.0 84.0M571.0 95.2L150.0 84.0M571.0 95.1L150.0 84.0M571.0 95.0L150.0 84.0M571.0 94.9L150.0 84.0M571.0 94.8L150.0 84.0M571.0 94.7L150.0 84.0M571.0 94.6L150.0 84.0M571.0 94.5L150.0 84.0M571.0 94.4L150.0 84.0M571.0 94.3L150.0 84.0M571.0 94.2L150.0 84.0M571.0 94.1L150.0 84.0M571.0 94.0L150.0 84.0M571.0 93.9L150.0 84.0M571.0 93.9L150.0 84.0M571.0 93.8L150.0 84.0M571.0 93.7L150.0 84.0M571.0 93.6L150.0 84.0M571.0 93.5L150.0 84.0M571.0 93.5L150.0 84.0M571.0 93.4L150.0 84.0M571.0 93.3L150.0 84.0M571.0 93.2L150.0 84.0M571.0 93.2L150.0 84.0M571.0 93.1L150.0 84.0M571.0 93.0L150.0 84.0M571.0 93.0L150.0 84.0M571.0 92.9L150.0 84.0M571.0 92.8L150.0 84.0M571.0 92.8L150.0 84.0M571.0 92.7L150.0 84.0M571.0 92.6L150.0 84.0M571.0 92.6L150.0 84.0M571.0 92.5L150.0 84.0M571.0 92.4L150.0 84.0M571.0 92.4L150.0 84.0M571.0 92.3L150.0 84.0M571.0 92.3L150.0 84.0M571.0 92.2L150.0 84.0M571.0 92.1L150.0 84.0M571.0 92.1L150.0 84.0M571.0 92.0L150.0 84.0M571.0 92.0L150.0 84.0M571.0 91.9L150.0 84.0M571.0 91.9L150.0 84.0M571.0 91.8L150.0 84.0M571.0 91.8L150.0 84.0M571.0 91.7L150.0 84.0M571.0 91.7L150.0 84.0M571.0 91.6L150.0 84.0M571.0 91.6L150.0 84.0M571.0 91.5L150.0 84.0M571.0 91.5L150.0 84.0M571.0 91.4L150.0 84.0M571.0 91.4L150.0 84.0M571.0 91.3L150.0 84.0M571.0 91.3L150.0 84.0M571.0 91.2L150.0 84.0M571.0 91.2L150.0 84.0M571.0 91.1L150.0 84.0M571.0 91.1L150.0 84.0M571.0 91.1L150.0 84.0M571.0 91.0L150.0 84.0M571.0 91.0L150.0 84.0M571.0 90.9L150.0 84.0M571.0 90.9L150.0 84.0M571.0 90.8L150.0 84.0M571.0 90.8L150.0 84.0M571.0 90.8L150.0 84.0M571.0 90.7L150.0 84.0M571.0 90.7L150.0 84.0M571.0 90.7L150.0 84.0M571.0 90.6L150.0 84.0M571.0 90.6L150.0 84.0M571.0 90.5L150.0 84.0M571.0 90.5L150.0 84.0M571.0 90.5L150.0 84.0M571.0 90.4L150.0 84.0M571.0 90.4L150.0 84.0M571.0 90.4L150.0 84.0M571.0 90.3L150.0 84.0M571.0 90.3L150.0 84.0M571.0 90.3L150.0 84.0M571.0 90.2L150.0 84.0M571.0 90.2L150.0 84.0M571.0 90.2L150.0 84.0M571.0 90.1L150.0 84.0M571.0 90.1L150.0 84.0M571.0 90.1L150.0 84.0M571.0 90.0L150.0 84.0M571.0 90.0L150.0 84.0M571.0 90.0L150.0 84.0M571.0 89.9L150.0 84.0M571.0 89.9L150.0 84.0M571.0 89.9L150.0 84.0M571.0 89.9L150.0 84.0M571.0 89.8L150.0 84.0M571.0 89.8L150.0 84.0M571.0 89.8L150.0 84.0M571.0 89.7L150.0 84.0M571.0 89.7L150.0 84.0M571.0 89.7L150.0 84.0M571.0 89.7L150.0 84.0M571.0 89.6L150.0 84.0M571.0 89.6L150.0 84.0M571.0 89.6L150.0 84.0M571.0 89.5L150.0 84.0M571.0 89.5L150.0 84.0M571.0 89.5L150.0 84.0M571.0 89.5L150.0 84.0M571.0 89.4L150.0 84.0M571.0 89.4L150.0 84.0M571.0 89.4L150.0 84.0M571.0 89.4L150.0 84.0M571.0 89.3L150.0 84.0M571.0 89.3L150.0 84.0M571.0 89.3L150.0 84.0M571.0 89.3L150.0 84.0M571.0 89.2L150.0 84.0M571.0 89.2L150.0 84.0M571.0 89.2L150.0 84.0M571.0 89.2L150.0 84.0M571.0 89.2L150.0 84.0M571.0 89.1L150.0 84.0M571.0 89.1L150.0 84.0M571.0 89.1L150.0 84.0M571.0 89.1L150.0 84.0M571.0 89.0L150.0 84.0M571.0 89.0L150.0 84.0M571.0 89.0L150.0 84.0M571.0 89.0L150.0 84.0M571.0 89.0L150.0 84.0M571.0 88.9L150.0 84.0M571.0 88.9L150.0 84.0M571.0 88.9L150.0 84.0M571.0 88.9L150.0 84.0M571.0 88.9L150.0 84.0M571.0 88.8L150.0 84.0M571.0 88.8L150.0 84.0M571.0 88.8L150.0 84.0M571.0 88.8L150.0 84.0M571.0 88.8L150.0 84.0M571.0 88.7L150.0 84.0M571.0 88.7L150.0 84.0M571.0 88.7L150.0 84.0M571.0 88.7L150.0 84.0M571.0 88.7L150.0 84.0M571.0 88.6L150.0 84.0M571.0 88.6L150.0 84.0M571.0 88.6L150.0 84.0M571.0 88.6L150.0 84.0M571.0 88.6L150.0 84.0M571.0 88.6L150.0 84.0M571.0 88.5L150.0 84.0M571.0 88.5L150.0 84.0M571.0 88.5L150.0 84.0M571.0 88.5L150.0 84.0M571.0 88.5L150.0 84.0M571.0 88.4L150.0 84.0M571.0 88.4L150.0 84.0M571.0 88.4L150.0 84.0M571.0 88.4L150.0 84.0M571.0 88.4L150.0 84.0M571.0 88.4L150.0 84.0M571.0 88.3L150.0 84.0M571.0 88.3L150.0 84.0M571.0 88.3L150.0 84.0M571.0 88.3L150.0 84.0M571.0 88.3L150.0 84.0M571.0 88.3L150.0 84.0M571.0 88.3L150.0 84.0M571.0 88.2L150.0 84.0M571.0 88.2L150.0 84.0M571.0 88.2L150.0 84.0M571.0 88.2L150.0 84.0M571.0 88.2L150.0 84.0M571.0 88.2L150.0 84.0M571.0 88.1L150.0 84.0M571.0 88.1L150.0 84.0M571.0 88.1L150.0 84.0M571.0 88.1L150.0 84.0M571.0 88.1L150.0 84.0M571.0 88.1L150.0 84.0M571.0 88.1L150.0 84.0M571.0 88.0L150.0 84.0M571.0 88.0L150.0 84.0M571.0 88.0L150.0 84.0M571.0 88.0L150.0 84.0M571.0 88.0L150.0 84.0M571.0 88.0L150.0 84.0M571.0 88.0L150.0 84.0M571.0 88.0L150.0 84.0M571.0 87.9L150.0 84.0M571.0 87.9L150.0 84.0M571.0 87.9L150.0 84.0M571.0 87.9L150.0 84.0M571.0 87.9L150.0 84.0M571.0 87.9L150.0 84.0M571.0 87.9L150.0 84.0M571.0 87.8L150.0 84.0M571.0 87.8L150.0 84.0M571.0 87.8L150.0 84.0M571.0 87.8L150.0 84.0M571.0 87.8L150.0 84.0M571.0 87.8L150.0 84.0M571.0 87.8L150.0 84.0M571.0 87.8L150.0 84.0M571.0 87.7L150.0 84.0M571.0 87.7L150.0 84.0M571.0 87.7L150.0 84.0M571.0 87.7L150.0 84.0M571.0 87.7L150.0 84.0M571.0 87.7L150.0 84.0M571.0 87.7L150.0 84.0M571.0 87.7L150.0 84.0M571.0 87.7L150.0 84.0M571.0 87.6L150.0 84.0M571.0 87.6L150.0 84.0M571.0 87.6L150.0 84.0M571.0 87.6L150.0 84.0M571.0 87.6L150.0 84.0M571.0 87.6L150.0 84.0M571.0 87.6L150.0 84.0M571.0 87.6L150.0 84.0M571.0 87.6L150.0 84.0M571.0 87.5L150.0 84.0M571.0 87.5L150.0 84.0M571.0 87.5L150.0 84.0M571.0 87.5L150.0 84.0M571.0 87.5L150.0 84.0M571.0 87.5L150.0 84.0M571.0 87.5L150.0 84.0M571.0 87.5L150.0 84.0M571.0 87.5L150.0 84.0M571.0 87.4L150.0 84.0M571.0 87.4L150.0 84.0M571.0 87.4L150.0 84.0M571.0 87.4L150.0 84.0M571.0 87.4L150.0 84.0M571.0 87.4L150.0 84.0M571.0 87.4L150.0 84.0M571.0 87.4L150.0 84.0M571.0 87.4L150.0 84.0M571.0 87.4L150.0 84.0M571.0 87.3L150.0 84.0M571.0 87.3L150.0 84.0M571.0 87.3L150.0 84.0M571.0 87.3L150.0 84.0M571.0 87.3L150.0 84.0M571.0 87.3L150.0 84.0M571.0 87.3L150.0 84.0M571.0 87.3L150.0 84.0M571.0 87.3L150.0 84.0M571.0 87.3L150.0 84.0M571.0 87.3L150.0 84.0M571.0 87.2L150.0 84.0M571.0 87.2L150.0 84.0M571.0 87.2L150.0 84.0M571.0 87.2L150.0 84.0M571.0 87.2L150.0 84.0M571.0 87.2L150.0 84.0M571.0 87.2L150.0 84.0M571.0 87.2L150.0 84.0M571.0 87.2L150.0 84.0M571.0 87.2L150.0 84.0M571.0 87.2L150.0 84.0M571.0 87.1L150.0 84.0M571.0 87.1L150.0 84.0M571.0 87.1L150.0 84.0M571.0 87.1L150.0 84.0M571.0 87.1L150.0 84.0M571.0 87.1L150.0 84.0M571.0 87.1L150.0 84.0M571.0 87.1L150.0 84.0M571.0 87.1L150.0 84.0M571.0 87.1L150.0 84.0M571.0 87.1L150.0 84.0M571.0 87.1L150.0 84.0M571.0 87.1L150.0 84.0M571.0 87.0L150.0 84.0M571.0 87.0L150.0 84.0M571.0 87.0L150.0 84.0M571.0 87.0L150.0 84.0M571.0 87.0L150.0 84.0M571.0 87.0L150.0 84.0M571.0 87.0L150.0 84.0M571.0 87.0L150.0 84.0M571.0 87.0L150.0 84.0M571.0 87.0L150.0 84.0M571.0 87.0L150.0 84.0M571.0 87.0L150.0 84.0M571.0 87.0L150.0 84.0M571.0 86.9L150.0 84.0M571.0 86.9L150.0 84.0M571.0 86.9L150.0 84.0M571.0 86.9L150.0 84.0M571.0 86.9L150.0 84.0M571.0 86.9L150.0 84.0" stroke="#2c2c2c" stroke-width=".4" fill="none" opacity=".62"/>
<rect x="98" y="84" width="422" height="50" fill="url(#fog)"/>
<rect x="98" y="63" width="422" height="21" fill="#fefefe"/>
<path d="M98 84.2H520" stroke="#cfcfcf" stroke-width=".6"/>
<path d="M183.5 63 L418.5 63 L418.5 266 L186 291 L183.5 195 Z" fill="url(#tint)" opacity=".55"/>
<rect x="183.5" y="63" width="235" height="62" fill="url(#tint)" mask="url(#skym)"/>
<path d="M183.5 63 L183.5 195 L186 291 L418.5 266 L418.5 63" fill="none" stroke="#4a4a4a" stroke-width=".6"/>
</g>
<path d="M55 298 L566 242.5" stroke="#e8282c" stroke-width="1"/>
<path d="M168 104.6 L348 326" stroke="#2320c8" stroke-width="1.1"/>
<g id="figure">
<!-- pants -->
<path d="M277 249 L286 246 L300 248 L316 246 L328 250 L338 256 L346 263 L350 272 L353 280 L351 287 L341 292 L333 294 L330 288 L326 281 L322 276 L318 272 L314 274 L318 284 L322 294 L324 303 L309 303 L300 296 L292 288 L285 280 L280 268 L277 258 Z" fill="#121212"/>
<path d="M316 270 L334 292 L334 300 L330 303.4 L322 303.4 Z" fill="#141414"/>
<path d="M300 250 L312 262 L318 272 L314 274 L306 262 Z" fill="#2e3234"/>
<path d="M282 254 L292 252 L304 262 L310 272 L306 277 L298 270 L288 266 Z" fill="#34383a" opacity=".8"/>
<path d="M318 250 L330 252 L342 262 L346 270 L338 268 L328 258 Z" fill="#303436" opacity=".7"/>
<path d="M318 262 L330 272 L340 286 L334 290 L326 278 Z" fill="#2a2d2f" opacity=".7"/>
<path d="M333 284 L351 277 L353 281 L351 287 L335 293 Z" fill="#2a2c2d"/>
<!-- left foot (toward viewer) -->
<path d="M309 272 Q304 281 304 290 Q306 299 311 303 L327 303 Q328 294 324 285 Q319 275 316 271 Q312 269 309 272 Z" fill="#d7a78d"/>
<path d="M312 273 L318 291 L322 280" fill="none" stroke="#2a1a14" stroke-width=".6"/>
<path d="M304 290 Q306 299 311 303 L316 303 Q309 296 307 284 Z" fill="#a9745d" opacity=".7"/>
<!-- right foot -->
<path d="M333 293 Q340 287 352 285 Q362 283 369 285 Q372 288 369 293 Q362 298 350 300 Q338 301 333 299 Z" fill="#b9846c"/>
<path d="M333 296 Q345 299 360 296 Q367 294 370 290 Q369 296 360 298 Q345 302 333 299 Z" fill="#6c4435"/>
<path d="M340 290 L352 292 L366 287" fill="none" stroke="#2a1a14" stroke-width=".5"/>
<!-- shirt body -->
<path d="M288 192 L282 194 L272 199 L266 205 L262.5 214 L260.5 226 L260 236 L262 243 L270 249 L277 251 L281 247 L286 246 L300 249 L314 247 L320 246 L325 244 L330 238 L332.5 228 L331 216 L328 208 L322 202 L312 196 L306 192 L297 200 Z" fill="#5e6e74"/>
<!-- shirt shading -->
<path d="M266 205 L262.5 214 L260.5 226 L260 236 L262 243 L270 249 L275 246 L268 238 L266 226 L268 213 Z" fill="#3f4b50"/>
<path d="M328 208 L331 216 L332.5 228 L330 238 L325 244 L321 240 L326 232 L327 220 L325 212 Z" fill="#434f54"/>
<path d="M284 204 Q297 214 310 204 L312 230 Q297 238 283 230 Z" fill="#67777d" opacity=".7"/>
<path d="M291 193 L297 207 L303 193 L300 196 L297 198 L294 196 Z" fill="#3a2a24"/>
<path d="M288 192 L283 195 L291 203 L297 207 Z" fill="#71828a"/>
<path d="M306 192 L311 195 L303 203 L297 207 Z" fill="#71828a"/>
<!-- skeleton lines -->
<path d="M297 190 L297 250 M297 206 L287 204 L274 211 L266 232 L276 248 M297 206 L308 204 L320 208 L328 228 L323 243" fill="none" stroke="#15191b" stroke-width=".6"/>
<path d="M297 214v.1M297 224v.1M297 234v.1" stroke="#8c9aa0" stroke-width="1" stroke-linecap="round"/>
<!-- cuffs -->
<path d="M272 244 L276 250 L279 248 L275 242 Z" fill="#2c9a3a"/>
<path d="M321 238 L325 243 L327 240 L324 236 Z" fill="#2c9a3a"/>
<!-- hands -->
<path d="M277 249 Q282 243 290 246 Q293 250 288 252 Q281 253 277 249 Z" fill="#3a2620"/>
<path d="M313 245 Q318 241 323 243 Q324 248 319 249 Q314 249 313 245 Z" fill="#3a2620"/>
<!-- neck -->
<path d="M290 186 L290 194 L297 200 L304 194 L304 186 Z" fill="#5e4437"/>
<!-- face -->
<path d="M285.3 174 L285.3 183 Q286.6 190 291.5 192 Q297 193.8 302.5 192 Q306 189 306.6 183 L306.6 174 Z" fill="#92705f"/>
<path d="M285.3 174 L285.3 183 Q286.6 190 291.5 192 L294 186 L293.4 178 L295 174 Z" fill="#5a443a"/>
<path d="M296.2 174 L296.2 193.4 L297.8 193.4 L297.8 174 Z" fill="#2b211d"/>
<path d="M287.6 177.4 L294.4 177 L294.4 178.8 L288 179.2 Z" fill="#2e2420"/>
<path d="M299 177 L305 177.4 L304.6 179.2 L299 178.8 Z" fill="#3e2e28"/>
<path d="M291 185.4 Q297 183.4 303.4 185.4 L303.6 187 Q297 185.6 290.8 187 Z" fill="#2e2420"/>
<path d="M291.6 188 Q297 187 302.8 188 Q302.4 191.6 297 192.8 Q292 191.6 291.6 188 Z" fill="#4b3830" opacity=".85"/>
<path d="M299.4 179.6 Q303.6 179.8 305.4 183.6 Q303.4 185.4 300.2 184.6 Z" fill="#b98a76"/>
<!-- hat -->
<path d="M280.5 174 Q283 171 286 170 L287.5 162 Q290 159 296 160 Q302 159 304 162 L306 170 Q309 171.5 310.5 174 Q304 176 296 175.6 Q287 176 280.5 174 Z" fill="#3a372f"/>
<path d="M286 169.3 Q296 171.5 306 169.3 L306.3 171.5 Q296 173.7 285.7 171.5 Z" fill="#1f1d19"/>
<path d="M296 160 L296 175.6" stroke="#1c1a17" stroke-width=".7"/>
<path d="M288.5 162.5 Q291 160.5 295 161 L294.5 168.5 L287.6 168 Z" fill="#4a463c"/>
</g>

<g id="gizmo">
<path d="M299.7 152.5 L299.7 134" stroke="#4fd65c" stroke-width="1"/>
<path d="M299.8 117 L302.8 125.6 L296.8 125.6 Z" fill="#4fd65c"/>
<ellipse cx="299.7" cy="128" rx="5.2" ry="1.9" fill="#55d862"/>
<path d="M296.6 130.8 L302.8 130.8 L299.7 135.6 Z" fill="#4fd65c"/>
<path d="M304 156.2 L320 155.4" stroke="#ea3a4a" stroke-width="1"/>
<path d="M320 153 L325.6 152.7 L325.8 157.6 L320.2 157.9 Z" fill="#ea4a5a"/>
<path d="M326 153.6 L329.6 153.4 L329.8 157 L326.2 157.2 Z" fill="#ea4a5a"/>
<path d="M331 151.6 L338.4 154.8 L331.2 158.4 Z" fill="#ea3a4a"/>
<path d="M304 158.4 L308.6 157 L314.4 158.6 L315.6 163 L312 167.4 L308 165.6 L308.4 162 Z" fill="#3a8fe0"/>
<circle cx="298.8" cy="155.6" r="3.9" fill="#fafafa"/>
</g>

<g id="second">
<rect x="55.5" y="64" width="131.5" height="131" fill="#4b494b"/>
<rect x="57.5" y="74" width="128" height="119.5" fill="#cdcdcd"/>
<path d="M67.7 74V193.5M93.8 74V193.5M120.4 74V193.5M174 74V193.5M57.5 100.4H185.5M57.5 127.4H185.5M57.5 181.4H185.5" stroke="#444" stroke-width=".6" fill="none"/>
<path d="M147.4 74V193.5" stroke="#1d18c8" stroke-width="1"/>
<!-- mini figure -->
<path d="M137.6 158 L140 155 L154.6 155 L157.6 158 L158.6 170 L157.6 185 L156.6 193.5 L149.2 193.5 L149 178 L148 166 L147 178 L146.4 193.5 L138.8 193.5 L137.6 180 Z" fill="#131313"/>
<path d="M133.4 140 Q134.4 134.4 140 133.6 L155 133.6 Q161.4 134.4 163.4 140 L161 150 L157.4 158 L138.6 158 L135.6 150 Z" fill="#161616"/>
<path d="M134.4 141.4 L137 139.6 L141 150 L141.4 156 L153.4 156 L154.6 150 L159.4 139.6 L162.2 141.4 L159 151 L156.4 159.4 L138.8 159.4 L136.2 151 Z" fill="#66808a"/>
<path d="M139.4 157 L156 157 L155.6 160.4 L139.8 160.4 Z" fill="#4a3a30"/>
<ellipse cx="147.6" cy="142.6" rx="6.8" ry="6.6" fill="#0c0c0c"/>
<ellipse cx="147.6" cy="144.6" rx="3.8" ry="3.4" fill="#2c383c"/>
<path d="M136 149 L137.6 148 L138.6 151 L137 152 Z M158 148.4 L159.4 149.4 L158.4 152 L157 151 Z" fill="#2c9a3a"/>
<path d="M57.5 154.6H185.5" stroke="#e03030" stroke-width=".9"/>
<path d="M147.4 160V193.5" stroke="#1d18c8" stroke-width=".9"/>
<text x="121.5" y="128.6" font-family="'Liberation Mono',monospace" font-size="10.6" fill="#333" textLength="35" lengthAdjust="spacingAndGlyphs">592.72</text>
<text x="163" y="128.2" font-family="'Liberation Mono',monospace" font-size="7.4" fill="#333">mm</text>
<text transform="translate(123.6 140.5) rotate(90)" font-family="'Liberation Mono',monospace" font-size="10.6" fill="#333" textLength="40.5" lengthAdjust="spacingAndGlyphs">1419.99</text>
<text transform="translate(124.6 186.5) rotate(90)" font-family="'Liberation Mono',monospace" font-size="7.4" fill="#333">m</text>
<text transform="translate(167.6 140.5) rotate(90)" font-family="'Liberation Mono',monospace" font-size="10.6" fill="#333" textLength="40.5" lengthAdjust="spacingAndGlyphs">1419.99</text>
<text transform="translate(168.6 186.5) rotate(90)" font-family="'Liberation Mono',monospace" font-size="7.4" fill="#333">m</text>
<!-- header icons -->
<path d="M61.2 67 V71.5 M60 70.2 L61.2 71.8 L62.4 70.2" stroke="#bdbdbd" stroke-width=".6" fill="none"/>
<path d="M64 68 L66 70.4 M66 68 L64 70.4" stroke="#9a9a9a" stroke-width=".5"/>
<path d="M72.6 67.2 H77.6 V70.8 H72.6 Z M77.8 68.6 L79.8 67.4 V70.6 L77.8 69.4 Z" fill="#e6e6e6"/>
<path d="M81.6 68.8 L82.6 69.8 L83.6 68.8" stroke="#8a8a8a" stroke-width=".5" fill="none"/>
<rect x="178.2" y="66" width="6" height="6" fill="none" stroke="#e2e2e2" stroke-width=".7"/>
<path d="M179.4 67.2 L183 70.8 M183 67.2 L179.4 70.8" stroke="#e2e2e2" stroke-width=".7"/>
</g>

<g id="overlay">
<!-- 3d nav widgets -->
<g fill="none" stroke="#e8e8e8" stroke-width=".7">
<circle cx="72" cy="267.6" r="3.6"/><ellipse cx="72" cy="267.6" rx="1.6" ry="3.6"/><path d="M68.4 267.6H75.6"/>
</g>
<path d="M84.2 263.4L85.8 265.4H84.8V267H86.4V266L88.4 267.6L86.4 269.2V268.2H84.8V269.8H85.8L84.2 271.8L82.6 269.8H83.6V268.2H82V269.2L80 267.6L82 266V267H83.6V265.4H82.6Z" fill="none" stroke="#e8e8e8" stroke-width=".6"/>
<path d="M96.2 263.2L98 265.6H97V268.4L98.6 271.6H93.8L95.4 268.4V265.6H94.4Z" fill="none" stroke="#e8e8e8" stroke-width=".6"/>
<!-- axis widget -->
<path d="M79 294.4V277.4" stroke="#35c545" stroke-width="1"/>
<path d="M79 275.6L80.3 278.4H77.7Z" fill="#35c545"/>
<path d="M79 294.4L94 293.2" stroke="#e8282c" stroke-width="1"/>
<path d="M96.6 293L93.6 291.6V294.6Z" fill="#e8282c"/>
<path d="M79 294.4L84 296.6" stroke="#2a8fe4" stroke-width=".9"/>
<circle cx="84.8" cy="297" r="1.3" fill="#2a8fe4"/>
<!-- light widget -->
<circle cx="559" cy="281" r="5.2" fill="#f4f4f4"/>
<circle cx="559" cy="281" r="1.2" fill="#333"/>
<path d="M559 277.6V279M559 283V284.4M555.6 281H557M561 281H562.4M556.6 278.6L557.6 279.6M560.4 282.4L561.4 283.4M556.6 283.4L557.6 282.4M560.4 279.6L561.4 278.6" stroke="#333" stroke-width=".5"/>
</g>

</svg>
</div>
<!-- vertical scrollbar -->
<div style="left:566px;top:63px;width:8px;height:263px;background:#4a484a"></div>
<div style="left:567.4px;top:168px;width:5.2px;height:91px;border-radius:2.6px;background:#6c6a6c"></div>
<!-- status bar -->
<div style="left:55px;top:326px;width:519px;height:9px;background:#4a484a"></div>
<div style="left:55.0px;top:326.0px;width:28.0px;height:9.6px;background:#454345;"></div>
<div class="t" style="left:64.2px;top:329px;transform:translateY(0.09px) rotate(.03deg);font-size:5.6px;letter-spacing:-0.136px;color:#d0d0d0;">50%</div>
<svg style="left:87.0px;top:327.2px" width="8" height="8" viewBox="-4.0 -4.0 8 8"><path d="M-2 -1.4A2.6 2.6 0 1 1 -1.6 2" fill="none" stroke="#a8a8a8" stroke-width=".7"/><path d="M-3.2 -1.6L-1.2 -2.4L-1.4 -.2Z" fill="#a8a8a8"/></svg>
<svg style="left:98.0px;top:327.2px" width="8" height="8" viewBox="-4.0 -4.0 8 8"><path d="M-3 -1.4V2.6H2.4V.8" fill="none" stroke="#dcdcdc" stroke-width=".8"/><path d="M-1 .8Q-.6 -1.6 1.6 -1.6V-3L3.8 -1L1.6 1V-.4Q0 -.4 -1 .8Z" fill="#dcdcdc"/></svg>
<div class="t" style="left:128.0px;top:329px;transform:translateY(0.20px) rotate(.03deg);font-size:5.8px;letter-spacing:-0.137px;color:#cfcfcf;">Doc: 24.1M/8.92M</div>
<svg style="left:194.0px;top:328.2px" width="6" height="6" viewBox="-3.0 -3.0 6 6"><path d="M-1 -2L1 0L-1 2" fill="none" stroke="#d8d8d8" stroke-width=".7"/></svg>
<div style="left:316.0px;top:327.6px;width:136.5px;height:5.8px;background:#6c6a6c;border-radius:2.9px"></div>
<div style="left:566.0px;top:326.0px;width:8.0px;height:9.6px;background:#555355;"></div>
<!-- timeline -->
<div style="left:55px;top:336px;width:519px;height:131px;background:#514f51"></div>
<div style="left:55.0px;top:335.6px;width:519.0px;height:14.6px;background:#434143;"></div>
<div style="left:55.0px;top:337.0px;width:32.0px;height:13.4px;background:#514f51;"></div>
<div class="t b" style="left:59.2px;top:341px;transform:translateY(0.98px) rotate(.03deg);font-size:5.9px;letter-spacing:-0.128px;color:#f2f2f2;">Timeline</div>
<svg style="left:565.0px;top:340.6px" width="6" height="6" viewBox="-3.0 -3.0 6 6"><path d="M-2 -1.4H2M-2 0H2M-2 1.4H2" stroke="#8e8c8e" stroke-width=".7"/></svg>
<div style="left:187.0px;top:351.2px;width:387.0px;height:10.2px;background:#585658;"></div>
<div style="left:187.0px;top:361.2px;width:365.0px;height:10.0px;background:#4b494b;"></div>
<div style="left:552.0px;top:361.2px;width:14.0px;height:46.0px;background:#555355;"></div>
<div style="left:566.0px;top:369.5px;width:8.0px;height:37.5px;background:#4b494b;"></div>
<svg style="left:57.8px;top:356.2px" width="8" height="8" viewBox="-4.0 -4.0 8 8"><path d="M-2.6 -2.2V2.2" stroke="#8a888a" stroke-width=".8"/><path d="M2.4 -2.2V2.2L-1.6 0Z" fill="#8a888a"/><path d="M-1.2 0H2" stroke="#8a888a" stroke-width=".6"/></svg>
<svg style="left:73.5px;top:356.2px" width="8" height="8" viewBox="-4.0 -4.0 8 8"><path d="M2.4 -2.2V2.2" stroke="#8a888a" stroke-width=".8"/><path d="M1 -2.2V2.2L-2.6 0Z" fill="#8a888a"/></svg>
<svg style="left:89.8px;top:356.2px" width="8" height="8" viewBox="-4.0 -4.0 8 8"><path d="M-2 -2.8V2.8L2.8 0Z" fill="#ececec"/></svg>
<svg style="left:105.2px;top:356.2px" width="8" height="8" viewBox="-4.0 -4.0 8 8"><path d="M-2.6 -2.2V2.2" stroke="#ececec" stroke-width=".8"/><path d="M-1.2 -2.2V2.2L2.6 0Z" fill="#ececec"/></svg>
<div style="left:119.0px;top:354.0px;width:12.6px;height:12.6px;background:#353335;border-radius:1.5px"></div>
<svg style="left:120.0px;top:355.2px" width="10" height="10" viewBox="-5.0 -5.0 10 10"><path d="M-3 -1H-1.6L.4 -2.8V2.8L-1.6 1H-3Z" fill="#ececec"/><path d="M1.4 -1.4Q2.4 0 1.4 1.4M2.4 -2.4Q4 0 2.4 2.4" fill="none" stroke="#ececec" stroke-width=".6"/></svg>
<svg style="left:136.2px;top:355.2px" width="10" height="10" viewBox="-5.0 -5.0 10 10"><circle r="1.9" fill="none" stroke="#ececec" stroke-width="1.4"/><circle r="2.7" fill="none" stroke="#ececec" stroke-width=".8" stroke-dasharray=".9 1.22"/></svg>
<svg style="left:145px;top:364.4px" width="2" height="2" viewBox="0 0 2 2"><path d="M1.6 .2V1.6H.2Z" fill="#bdbdbd"/></svg>
<svg style="left:154.5px;top:355.2px" width="10" height="10" viewBox="-5.0 -5.0 10 10"><circle cx="-2.6" cy="-1.8" r="1.2" fill="none" stroke="#ececec" stroke-width=".8"/><circle cx="-2.6" cy="1.8" r="1.2" fill="none" stroke="#ececec" stroke-width=".8"/><path d="M-1.6 -1.2L3.8 2.4M-1.6 1.2L3.8 -2.4" stroke="#ececec" stroke-width=".8"/></svg>
<svg style="left:171.2px;top:355.2px" width="10" height="10" viewBox="-5.0 -5.0 10 10"><rect x="-3" y="-3" width="6" height="6" fill="none" stroke="#ececec" stroke-width=".8"/><path d="M3 -3V3H-3Z" fill="#ececec"/></svg>
<div style="left:190.4px;top:358.0px;width:0.9px;height:38.0px;background:#b0502c;"></div>
<svg style="left:187px;top:352.6px" width="8" height="8" viewBox="0 0 8 8"><path d="M1 1.6Q1 .6 2 .6H5.6Q6.6 .6 6.6 1.6V4.4L3.8 7.2L1 4.4Z" fill="#2f8fe8"/><path d="M2 1.6H5.6V3H2Z" fill="#7cc0ff" opacity=".8"/></svg>
<svg style="left:186.6px;top:361.6px" width="6" height="9" viewBox="0 0 6 9"><rect x=".8" y=".6" width="3.6" height="7.6" rx=".8" fill="#c8c6c8"/><path d="M2.2 2V4M2.2 5V7" stroke="#4b494b" stroke-width="1"/></svg>
<svg style="left:205.6px;top:361.6px" width="6" height="9" viewBox="0 0 6 9"><rect x=".8" y=".6" width="3.6" height="7.6" rx=".8" fill="#c8c6c8"/><path d="M2.6 2V4M2.6 5V7" stroke="#4b494b" stroke-width="1"/></svg>
<div style="left:55.0px;top:370.8px;width:132.0px;height:20.0px;background:#5f5d5f;"></div>
<svg style="left:57.0px;top:378.2px" width="6" height="6" viewBox="-3.0 -3.0 6 6"><path d="M-.8 -1.8L1 0L-.8 1.8" fill="none" stroke="#c8c8c8" stroke-width=".7"/></svg>
<div class="t b" style="left:67.0px;top:379px;transform:translateY(0.20px) rotate(.03deg);font-size:5.7px;letter-spacing:-0.151px;color:#f4f4f4;">FuseModel_A</div>
<svg style="left:170.2px;top:377.0px" width="8" height="8" viewBox="-4.0 -4.0 8 8"><rect x="-2.2" y="-3" width="4.4" height="6" fill="none" stroke="#e4e4e4" stroke-width=".9"/><path d="M-2.2 -1H2.2M-2.2 1H2.2" stroke="#e4e4e4" stroke-width=".6"/><rect x="-.7" y="-3" width="1.4" height="6" fill="#e4e4e4"/></svg>
<svg style="left:176.0px;top:378.4px" width="8" height="6" viewBox="-4 -3 8 6"><path d="M-1.5 -0.7L0 0.7L1.5 -0.7" fill="none" stroke="#c8c8c8" stroke-width="0.6"/></svg>
<div style="left:55.0px;top:391.0px;width:132.0px;height:14.4px;background:#555355;"></div>
<div class="t" style="left:58.8px;top:397px;transform:translateY(0.29px) rotate(.03deg);font-size:5.6px;letter-spacing:-0.106px;color:#e6e6e6;">Audio Track</div>
<svg style="left:157.5px;top:394.4px" width="10" height="10" viewBox="-5.0 -5.0 10 10"><path d="M-3 -1H-1.6L.4 -2.6V2.6L-1.6 1H-3Z" fill="#ececec"/><path d="M1.4 -1.4Q2.4 0 1.4 1.4M2.4 -2.2Q3.8 0 2.4 2.2" fill="none" stroke="#ececec" stroke-width=".6"/></svg>
<svg style="left:168.6px;top:394.2px" width="10" height="10" viewBox="-5.0 -5.0 10 10"><path d="M-1.4 2V-2.8L2.6 -3.4V1.4" fill="none" stroke="#ececec" stroke-width=".8"/><ellipse cx="-2.2" cy="2.2" rx="1.2" ry=".9" fill="#ececec"/><ellipse cx="1.8" cy="1.6" rx="1.2" ry=".9" fill="#ececec"/></svg>
<svg style="left:176.0px;top:396.8px" width="8" height="6" viewBox="-4 -3 8 6"><path d="M-1.5 -0.7L0 0.7L1.5 -0.7" fill="none" stroke="#c8c8c8" stroke-width="0.6"/></svg>
<div style="left:192.0px;top:371.2px;width:14.4px;height:19.2px;background:#7a68bf;border:.8px solid #f0f0f0;border-radius:2px"></div>
<svg style="left:193.4px;top:373.6px" width="4" height="4" viewBox="-2.0 -2.0 4 4"><path d="M-.6 -1.4L.8 0L-.6 1.4" fill="none" stroke="#e8e8ff" stroke-width=".6"/></svg>
<svg style="left:555.0px;top:376.9px" width="7" height="7" viewBox="-3.5 -3.5 7 7"><path d="M-2.6 0H2.6M0 -2.6V2.6" stroke="#f0f0f0" stroke-width=".8"/></svg>
<svg style="left:555.0px;top:394.9px" width="7" height="7" viewBox="-3.5 -3.5 7 7"><path d="M-2.6 0H2.6M0 -2.6V2.6" stroke="#f0f0f0" stroke-width=".8"/></svg>
<div style="left:55.0px;top:456.6px;width:519.0px;height:10.4px;background:#4d4b4d;"></div>
<svg style="left:57.4px;top:459.6px" width="8" height="4" viewBox="-4.0 -2.0 8 4"><path d="M-3.4 -.9H-1.6V.9H-3.4Z M-.9 -.9H.9V.9H-.9Z M1.6 -.9H3.4V.9H1.6Z" fill="none" stroke="#6c6a6c" stroke-width=".5"/></svg>
<svg style="left:72.0px;top:457.0px" width="8" height="8" viewBox="-4.0 -4.0 8 8"><path d="M-3 2.4Q-2.6 -1 .6 -1V-2.8L3.6 0L.6 2.6V.8Q-1.6 .6 -3 2.4Z" fill="#f0f0f0"/></svg>
<div class="t b" style="left:103.0px;top:459px;transform:translateY(0.30px) rotate(.03deg);font-size:5.7px;letter-spacing:-0.129px;color:#f0f0f0;">0:00:00:00</div>
<div class="t" style="left:154.0px;top:459px;transform:translateY(0.40px) rotate(.03deg);font-size:5.9px;letter-spacing:-0.128px;color:#e0e0e0;">(30.00 fps)</div>
<svg style="left:190.6px;top:459.6px" width="6" height="4" viewBox="-3.0 -2.0 6 4"><path d="M-2.2 .8L-.8 -.8L0 0L.8 -.6L2.2 .8Z" fill="#9a989a"/></svg>
<div style="left:207.0px;top:458.6px;width:40.0px;height:1.6px;background:#6c6a6c;border-radius:.8px"></div>
<svg style="left:202.6px;top:459.0px" width="8" height="6" viewBox="-4.0 -3.0 8 6"><path d="M0 -2.6L2.6 2.2H-2.6Z" fill="#f4f4f4"/></svg>
<svg style="left:255.4px;top:458.0px" width="8" height="6" viewBox="-4.0 -3.0 8 6"><path d="M-3.6 1.8L-1.4 -1.6L0 .2L1.2 -1.2L3.6 1.8Z" fill="#e6e6e6"/></svg>
<!-- right panels -->
<div style="left:576px;top:48px;width:191px;height:419px;background:#514f51"></div>
<div style="left:576.0px;top:48.0px;width:191.0px;height:6.4px;background:#434143;"></div>
<svg style="left:758.0px;top:49.2px" width="6" height="4" viewBox="-3.0 -2.0 6 4"><path d="M-1.8 -1L-.8 0L-1.8 1M.4 -1L1.4 0L.4 1" fill="none" stroke="#a8a6a8" stroke-width=".6"/></svg>
<div style="left:576.0px;top:54.4px;width:191.0px;height:14.4px;background:#434143;"></div>
<div style="left:595.0px;top:54.8px;width:35.4px;height:14.0px;background:#514f51;border-radius:1.5px 1.5px 0 0"></div>
<div class="t b" style="left:580.0px;top:59px;transform:translateY(0.51px) rotate(.03deg);font-size:5.8px;letter-spacing:-0.107px;color:#9c9a9c;">Info</div>
<div class="t b" style="left:599.4px;top:59px;transform:translateY(0.50px) rotate(.03deg);font-size:5.7px;letter-spacing:-0.119px;color:#ffffff;">Properties</div>
<div class="t b" style="left:635.4px;top:59px;transform:translateY(0.44px) rotate(.03deg);font-size:5.3px;letter-spacing:-0.103px;color:#9c9a9c;">Brush</div>
<svg style="left:757.0px;top:58.4px" width="6" height="6" viewBox="-3.0 -3.0 6 6"><path d="M-2.6 -1.8H2.6M-2.6 0H2.6M-2.6 1.8H2.6" stroke="#a8a6a8" stroke-width=".8"/></svg>
<div style="left:581.0px;top:71.6px;width:11.4px;height:11.0px;background:#353335;border-radius:1.5px"></div>
<svg style="left:580.6px;top:71.0px" width="12" height="12" viewBox="-6.0 -6.0 12 12"><g transform="scale(1.15)"><circle cx=".9" cy="-3.1" r="1.05" fill="#f0f0f0"/><path d="M-2.8 -1.4L.4 -1.8L3 -.2M.4 -1.8L-.6 1L1.8 3.6M-.6 1L-3.2 3.2" fill="none" stroke="#f0f0f0" stroke-width=".95" stroke-linecap="round"/></g></svg>
<svg style="left:592.8px;top:71.2px" width="12" height="12" viewBox="-6.0 -6.0 12 12"><path d="M-4 -4.2Q0 -3 4 -4.2Q4.6 2.4 0 4.6Q-4.6 2.4 -4 -4.2Z" fill="#e2e2e2"/><path d="M-2.6 -1.4Q-1.6 -2.4 -.6 -1.4M.6 -1.4Q1.6 -2.4 2.6 -1.4M-1.8 1.2Q0 3 1.8 1.2Z" fill="#514f51" stroke="#514f51" stroke-width=".6"/></svg>
<svg style="left:605.8px;top:72.0px" width="10" height="10" viewBox="-5.0 -5.0 10 10"><circle r="2.4" fill="none" stroke="#aeacae" stroke-width=".7"/><path d="M-1.2 -2.6L0 -3.8L1.2 -2.6M-3.4 1H3.4" fill="none" stroke="#aeacae" stroke-width=".6"/></svg>
<div class="t b" style="left:619.6px;top:74px;transform:translateY(0.94px) rotate(.03deg);font-size:5.4px;letter-spacing:-0.125px;color:#d0d0d0;">Body</div>
<svg style="left:579.2px;top:88.0px" width="10" height="10" viewBox="-5.0 -5.0 10 10"><circle cx="-.8" cy="-.8" r="2.5" fill="none" stroke="#e0e0e0" stroke-width=".8"/><path d="M1.2 1.2L3.6 3.6" stroke="#e0e0e0" stroke-width="1"/><path d="M-1.8 -.8H.2M-.8 -1.8V.2" stroke="#e0e0e0" stroke-width=".5"/></svg>
<div class="t" style="left:592.0px;top:90px;transform:translateY(0.29px) rotate(.03deg);font-size:6.0px;letter-spacing:-0.068px;color:#e0e0e0;">sitting</div>
<div style="left:580.0px;top:97.0px;width:162.5px;height:0.8px;background:#636163;"></div>
<svg style="left:743.4px;top:89.4px" width="8" height="8" viewBox="-4.0 -4.0 8 8"><circle r="1.9" fill="none" stroke="#f0f0f0" stroke-width="1.5"/><circle r="2.7" fill="none" stroke="#f0f0f0" stroke-width=".8" stroke-dasharray=".9 1.2"/></svg>
<div style="left:751.8px;top:95.4px;width:1.0px;height:1.0px;background:#d0d0d0;"></div>
<div style="left:580.4px;top:113.6px;width:168.0px;height:55.2px;background:#4b494b;"></div>
<div style="left:580.4px;top:130.2px;width:168.0px;height:16.4px;background:#6b696b;"></div>
<div style="left:749.0px;top:113.6px;width:6.0px;height:55.2px;background:#464446;"></div>
<div style="left:596px;top:113.6px;width:152.2px;height:55.2px;overflow:hidden">
<div class="t" style="left:2.0px;top:4px;transform:translateY(0.03px) rotate(.03deg);font-size:7.0px;letter-spacing:-0.140px;color:#f6f6f6;">Waking up while sitting - loop</div>
<div class="t" style="left:2.0px;top:21px;transform:translateY(0.03px) rotate(.03deg);font-size:7.0px;letter-spacing:-0.129px;color:#f6f6f6;">Sitting to standing</div>
<div class="t" style="left:2.0px;top:38px;transform:translateY(0.53px) rotate(.03deg);font-size:7.0px;letter-spacing:-0.107px;color:#f6f6f6;">Little girl sitting on a bench swinging her legs - loop</div>
</div>
<div style="left:581.8px;top:113.8px;width:12.0px;height:14.2px;background:linear-gradient(#a4a4a4,#b4b4b4 45%,#d4d4d4 70%,#dadada);"></div>
<div style="left:581.8px;top:130.8px;width:12.0px;height:14.6px;background:linear-gradient(#a4a4a4,#b4b4b4 45%,#d4d4d4 70%,#dadada);"></div>
<div style="left:581.8px;top:147.8px;width:12.0px;height:15.0px;background:linear-gradient(#a4a4a4,#b4b4b4 45%,#d4d4d4 70%,#dadada);"></div>
<div style="left:581.8px;top:165.0px;width:12.0px;height:3.6px;background:#a4a4a4;"></div>
<svg style="left:581.8px;top:114.6px" width="12" height="12" viewBox="-6.0 -6.0 12 12"><path d="M-4 1.6Q-1 -.6 0 -1.6L2 -1.2L3.6 .6L-1 1.8Z" fill="#1a1a1a"/><circle cx="-.8" cy="-2.2" r="1" fill="#222"/><path d="M-6 3H6" stroke="#e8e8e8" stroke-width="1.6"/></svg>
<svg style="left:581.8px;top:132.0px" width="12" height="12" viewBox="-6.0 -6.0 12 12"><path d="M-.8 -3.2H1L1.4 .8L.8 4H-.2L-1 .8Z" fill="#161616"/><circle cx=".2" cy="-4" r=".9" fill="#222"/><path d="M-6 4.6H6" stroke="#e2e2e2" stroke-width="1.2"/></svg>
<svg style="left:581.8px;top:149.0px" width="12" height="12" viewBox="-6.0 -6.0 12 12"><path d="M-1.4 -3L.4 -2.4L1 .6L2.6 3L1.6 3.4L-.6 1Z" fill="#a8323a"/><circle cx="-.8" cy="-3.8" r=".9" fill="#3a2a2a"/><path d="M-.6 1L2.8 2.2" stroke="#2a2a2a" stroke-width=".8"/><path d="M-6 4.8H6" stroke="#e2e2e2" stroke-width="1.2"/></svg>
<div style="left:760.0px;top:84.0px;width:7.0px;height:92.0px;background:#4a484a;"></div>
<div style="left:760.4px;top:86.4px;width:5.0px;height:24.6px;background:#6a686a;border-radius:2.5px"></div>
<svg style="left:729.0px;top:170.4px" width="8" height="8" viewBox="-4.0 -4.0 8 8"><rect x="-2.8" y="-2.4" width="5.6" height="4.8" fill="none" stroke="#d8d8d8" stroke-width=".8"/><circle r="1.1" fill="#d8d8d8"/></svg>
<svg style="left:743.2px;top:170.4px" width="6" height="8" viewBox="-3.0 -4.0 6 8"><path d="M0 -2.6V2.6" stroke="#7a787a" stroke-width=".9"/></svg>
<div style="left:576.0px;top:180.6px;width:191.0px;height:2.2px;background:#434143;"></div>
<div style="left:576.0px;top:182.8px;width:191.0px;height:14.4px;background:#434143;"></div>
<div style="left:576.0px;top:183.2px;width:17.0px;height:14.0px;background:#514f51;border-radius:0 1.5px 0 0"></div>
<div class="t b" style="left:580.2px;top:187px;transform:translateY(1.00px) rotate(.03deg);font-size:5.7px;letter-spacing:-0.144px;color:#ffffff;">3D</div>
<div class="t b" style="left:597.6px;top:187px;transform:translateY(0.94px) rotate(.03deg);font-size:5.4px;letter-spacing:-0.136px;color:#c4c2c4;">Layers</div>
<div class="t b" style="left:623.8px;top:187px;transform:translateY(0.93px) rotate(.03deg);font-size:5.6px;letter-spacing:-0.126px;color:#c4c2c4;">Channels</div>
<div class="t b" style="left:656.8px;top:188px;transform:translateY(0.01px) rotate(.03deg);font-size:5.8px;letter-spacing:-0.140px;color:#c4c2c4;">History</div>
<svg style="left:757.0px;top:187.0px" width="6" height="6" viewBox="-3.0 -3.0 6 6"><path d="M-2.6 -1.8H2.6M-2.6 0H2.6M-2.6 1.8H2.6" stroke="#a8a6a8" stroke-width=".8"/></svg>
<div style="left:646.6px;top:201.0px;width:10.4px;height:11.0px;background:#353335;border-radius:1.5px"></div>
<svg style="left:647.8px;top:202.6px" width="8" height="8" viewBox="-4.0 -4.0 8 8"><path d="M-2.6 -2.8H2.6M-2.6 -2.8V2.4M-2.6 -.2H2.6M-2.6 2.4H2.6" fill="none" stroke="#ececec" stroke-width=".9"/><path d="M-1 -1.5H2.6M-1 1.1H2.6" stroke="#ececec" stroke-width=".5"/></svg>
<svg style="left:659.8px;top:202.6px" width="8" height="8" viewBox="-4.0 -4.0 8 8"><path d="M-2.2 -2.6H2.2L1.8 2.8H-1.8Z" fill="#d8d8d8"/><path d="M-2.2 -2.6H2.2" stroke="#f4f4f4" stroke-width=".8"/></svg>
<svg style="left:672.2px;top:202.6px" width="8" height="8" viewBox="-4.0 -4.0 8 8"><path d="M-2.6 -2.8H.6L2.6 -.8V2.8H-2.6Z" fill="none" stroke="#d8d8d8" stroke-width=".8"/><path d="M-1.4 0H1.4M-1.4 1.4H1.4" stroke="#d8d8d8" stroke-width=".5"/></svg>
<svg style="left:684.0px;top:202.4px" width="8" height="8" viewBox="-4.0 -4.0 8 8"><path d="M0 -3A2.4 2.4 0 0 1 1.4 1.2V2H-1.4V1.2A2.4 2.4 0 0 1 0 -3Z" fill="#ececec"/><path d="M-1 3H1" stroke="#ececec" stroke-width=".8"/></svg>
<div style="left:602.5px;top:266.4px;width:155.0px;height:9.0px;background:#6a686a;"></div>
<svg style="left:576.8px;top:216.0px" width="8" height="8" viewBox="-4.0 -4.0 8 8"><path d="M-3.4 0Q0 -3.4 3.4 0Q0 3.4 -3.4 0Z" fill="none" stroke="#a09ea0" stroke-width=".8"/><circle r="1.2" fill="#a09ea0"/></svg>
<svg style="left:587.2px;top:216.0px" width="8" height="8" viewBox="-4.0 -4.0 8 8"><path d="M-3 1.6H3M-2.2 3H2.2M0 -3.2V1.6M-2 -1H2" stroke="#ececec" stroke-width=".9" fill="none"/><circle cy="-2.6" r=".9" fill="#ececec"/></svg>
<div class="t b" style="left:597.5px;top:217px;transform:translateY(0.94px) rotate(.03deg);font-size:5.3px;letter-spacing:-0.108px;color:#ececec;">Environment</div>
<svg style="left:576.8px;top:226.1px" width="8" height="8" viewBox="-4.0 -4.0 8 8"><path d="M-3.4 0Q0 -3.4 3.4 0Q0 3.4 -3.4 0Z" fill="none" stroke="#a09ea0" stroke-width=".8"/><circle r="1.2" fill="#a09ea0"/></svg>
<svg style="left:587.2px;top:226.1px" width="8" height="8" viewBox="-4.0 -4.0 8 8"><path d="M-3 -2.6H3M-3 -2.6V2.6M-3 0H3M-3 2.6H3" fill="none" stroke="#ececec" stroke-width=".9"/><path d="M-1.2 -1.3H3M-1.2 1.3H3" stroke="#ececec" stroke-width=".5"/></svg>
<div class="t b" style="left:597.5px;top:228px;transform:translateY(0.01px) rotate(.03deg);font-size:5.5px;letter-spacing:-0.141px;color:#ececec;">Scene</div>
<svg style="left:576.8px;top:236.4px" width="8" height="8" viewBox="-4.0 -4.0 8 8"><path d="M-3.4 0Q0 -3.4 3.4 0Q0 3.4 -3.4 0Z" fill="none" stroke="#a09ea0" stroke-width=".8"/><circle r="1.2" fill="#a09ea0"/></svg>
<svg style="left:595.2px;top:236.4px" width="8" height="8" viewBox="-4.0 -4.0 8 8"><path d="M-3.2 -1.8H1.2V1.8H-3.2Z M1.4 -.4L3.4 -1.6V1.6L1.4 .4Z" fill="#ececec"/></svg>
<div class="t b" style="left:605.8px;top:238px;transform:translateY(0.34px) rotate(.03deg);font-size:5.3px;letter-spacing:-0.116px;color:#ececec;">Current View</div>
<svg style="left:576.8px;top:246.5px" width="8" height="8" viewBox="-4.0 -4.0 8 8"><path d="M-3.4 0Q0 -3.4 3.4 0Q0 3.4 -3.4 0Z" fill="none" stroke="#f6f6f6" stroke-width=".8"/><circle r="1.2" fill="#f6f6f6"/></svg>
<svg style="left:595.2px;top:246.5px" width="8" height="8" viewBox="-4.0 -4.0 8 8"><circle r="1.3" fill="#ececec"/><path d="M-3 -2.6L-1.6 -1.4M-3.2 .4H-2M3 2.6L1.6 1.4M.4 3.2V2M-2 2.4L-1.2 1.6" stroke="#ececec" stroke-width=".6"/><path d="M1.4 -.4L3 -1.6" stroke="#ececec" stroke-width=".6"/></svg>
<div class="t b" style="left:605.8px;top:248px;transform:translateY(0.44px) rotate(.03deg);font-size:5.4px;letter-spacing:-0.131px;color:#ececec;">Infinite Light 1</div>
<svg style="left:576.8px;top:256.7px" width="8" height="8" viewBox="-4.0 -4.0 8 8"><path d="M-3.4 0Q0 -3.4 3.4 0Q0 3.4 -3.4 0Z" fill="none" stroke="#a09ea0" stroke-width=".8"/><circle r="1.2" fill="#a09ea0"/></svg>
<svg style="left:595.2px;top:256.7px" width="8" height="8" viewBox="-4.0 -4.0 8 8"><path d="M-3.2 -1.8H1.2V1.8H-3.2Z M1.4 -.4L3.4 -1.6V1.6L1.4 .4Z" fill="#ececec"/></svg>
<div class="t b" style="left:605.8px;top:258px;transform:translateY(0.61px) rotate(.03deg);font-size:5.5px;letter-spacing:-0.139px;color:#ececec;">Default Camera</div>
<svg style="left:576.8px;top:266.8px" width="8" height="8" viewBox="-4.0 -4.0 8 8"><path d="M-3.4 0Q0 -3.4 3.4 0Q0 3.4 -3.4 0Z" fill="none" stroke="#f6f6f6" stroke-width=".8"/><circle r="1.2" fill="#f6f6f6"/></svg>
<svg style="left:594.8px;top:266.8px" width="8" height="8" viewBox="-4.0 -4.0 8 8"><path d="M-2.6 2.4L2.2 -2.4" stroke="#ececec" stroke-width="1"/><circle cx="-2.4" cy="2.2" r="1.3" fill="#ececec"/><circle cx="2.2" cy="-2.2" r="1.3" fill="#ececec"/></svg>
<div class="t" style="left:606.2px;top:268px;transform:translateY(0.80px) rotate(.03deg);font-size:5.7px;letter-spacing:-0.123px;color:#151515;">Tops_Skeleton</div>
<svg style="left:576.8px;top:276.9px" width="8" height="8" viewBox="-4.0 -4.0 8 8"><path d="M-3.4 0Q0 -3.4 3.4 0Q0 3.4 -3.4 0Z" fill="none" stroke="#f6f6f6" stroke-width=".8"/><circle r="1.2" fill="#f6f6f6"/></svg>
<svg style="left:603.5px;top:276.9px" width="8" height="8" viewBox="-4.0 -4.0 8 8"><path d="M-2.2 -3H.4L2.2 -1.2V3H-2.2Z" fill="none" stroke="#ececec" stroke-width=".8"/><path d="M-1 -.4H1M-1 1H1" stroke="#ececec" stroke-width=".5"/></svg>
<div class="t b" style="left:614.2px;top:278px;transform:translateY(0.81px) rotate(.03deg);font-size:5.5px;letter-spacing:-0.149px;color:#ececec;">PackedMaterial0mat</div>
<svg style="left:587.2px;top:268.0px" width="8" height="6" viewBox="-4 -3 8 6"><path d="M-1.6 -0.7L0 0.7L1.6 -0.7" fill="none" stroke="#c8c8c8" stroke-width="0.6"/></svg>
<div style="left:760.0px;top:213.0px;width:7.0px;height:242.0px;background:#4c4a4c;"></div>
<div style="left:576.0px;top:455.0px;width:191.0px;height:12.0px;background:#4d4b4d;"></div>
<svg style="left:671.8px;top:456.0px" width="8" height="8" viewBox="-4.0 -4.0 8 8"><path d="M-2 -2.4H2L1.6 2.6H-1.6Z" fill="#dcdcdc"/><path d="M-2 -2.4H2" stroke="#f4f4f4" stroke-width=".7"/></svg>
<svg style="left:686.8px;top:456.0px" width="8" height="8" viewBox="-4.0 -4.0 8 8"><path d="M0 -3A2.3 2.3 0 0 1 1.3 1.1V1.9H-1.3V1.1A2.3 2.3 0 0 1 0 -3Z" fill="#ececec"/><path d="M-.9 2.8H.9" stroke="#ececec" stroke-width=".7"/></svg>
<svg style="left:701.8px;top:456.0px" width="8" height="8" viewBox="-4.0 -4.0 8 8"><rect x="-2.8" y="-2.6" width="5.6" height="5.2" fill="none" stroke="#e0e0e0" stroke-width=".8"/><circle r="1.1" fill="#e0e0e0"/></svg>
<svg style="left:715.8px;top:456.0px" width="8" height="8" viewBox="-4.0 -4.0 8 8"><path d="M-2.8 2.6H2.8M0 -3V.8M-1.4 -.6L0 .9L1.4 -.6" fill="none" stroke="#e6e6e6" stroke-width=".9"/><path d="M.6 -2.8L2.4 -3.2" stroke="#e6e6e6" stroke-width=".6"/></svg>
<svg style="left:730.8px;top:456.0px" width="8" height="8" viewBox="-4.0 -4.0 8 8"><path d="M-2 2.6L-1 -1L0 1L1 -2.6L2 2.6" fill="none" stroke="#6e6c6e" stroke-width=".7"/></svg>
<svg style="left:745.8px;top:456.0px" width="8" height="8" viewBox="-4.0 -4.0 8 8"><path d="M-2.2 -1.8H2.2L1.8 3H-1.8Z" fill="#bcbabc"/><path d="M-2.8 -2.4H2.8M-.8 -3.2H.8" stroke="#bcbabc" stroke-width=".8"/><path d="M-.7 -.8V2M.7 -.8V2" stroke="#4d4b4d" stroke-width=".5"/></svg>
<svg style="left:679.0px;top:462.6px" width="2" height="2" viewBox="0 0 2 2"><path d="M1.6 .2V1.6H.2Z" fill="#bdbdbd"/></svg>
<svg style="left:694.0px;top:462.6px" width="2" height="2" viewBox="0 0 2 2"><path d="M1.6 .2V1.6H.2Z" fill="#bdbdbd"/></svg>
</div>

</div>
</div>
</body></html>
